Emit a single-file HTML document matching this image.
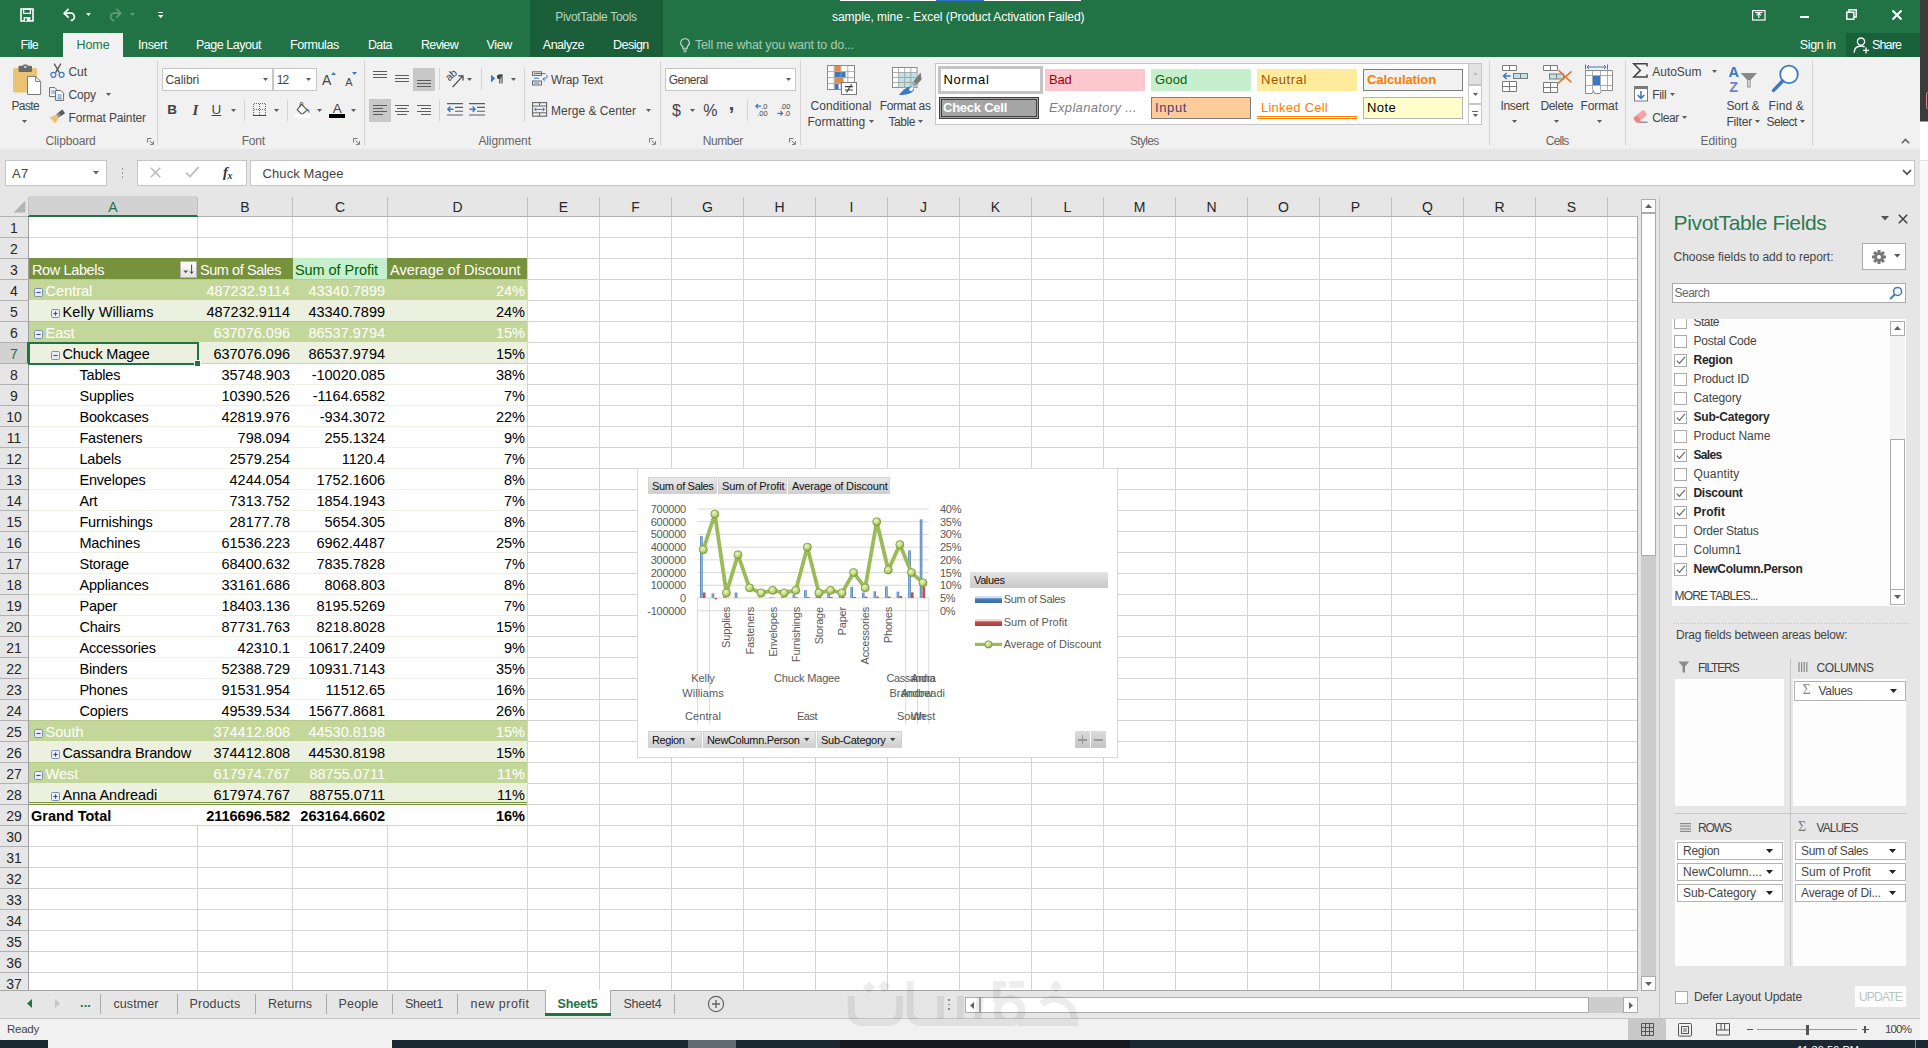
<!DOCTYPE html>
<html><head><meta charset="utf-8"><title>sample, mine - Excel</title>
<style>
html,body{margin:0;padding:0;background:#fff;}
body{width:1928px;height:1048px;overflow:hidden;position:relative;font-family:"Liberation Sans",sans-serif;}
#app{position:absolute;left:0;top:0;width:1928px;height:1048px;overflow:hidden;}
#app div,#app span.t,#app svg{position:absolute;}
span.t{white-space:nowrap;font-family:"Liberation Sans",sans-serif;}
svg{overflow:visible;}
</style></head><body><div id="app">
<div style="left:1920px;top:0px;width:8px;height:121px;background:#3b3b3b;"></div>
<div style="left:1920px;top:121px;width:8px;height:1px;background:#f08a24;"></div>
<div style="left:1920px;top:122px;width:8px;height:38px;background:#ffffff;"></div>
<div style="left:1920px;top:160px;width:8px;height:1px;background:#e2e2e2;"></div>
<div style="left:1920px;top:161px;width:8px;height:879px;background:#f9f9f9;"></div>
<div style="left:1926px;top:92px;width:3px;height:17px;border:1px solid #e08b7a;border-radius:3px;box-sizing:border-box;"></div>
<div style="left:0px;top:0px;width:1920px;height:57px;background:#217346;"></div>
<div style="left:530px;top:0px;width:133px;height:57px;background:#1b5e3a;"></div>
<div style="left:840px;top:0px;width:96px;height:1px;background:#ffffff;"></div>
<div style="left:936px;top:0px;width:48px;height:1px;background:#2f6fc6;"></div>
<div style="left:984px;top:0px;width:97px;height:1px;background:#ffffff;"></div>
<svg style="left:20px;top:8px;" width="14" height="14" viewBox="0 0 14 14"><path d="M1 1H13V13H1Z" fill="none" stroke="#fff" stroke-width="1.6"/><rect x="3.6" y="1" width="6.8" height="4.4" fill="none" stroke="#fff" stroke-width="1.3"/><rect x="3.6" y="9" width="6.8" height="4" fill="#fff"/><rect x="5" y="10.4" width="1.8" height="2.6" fill="#217346"/></svg>
<svg style="left:63px;top:8px;" width="15" height="13" viewBox="0 0 15 13"><path d="M1.2 5.2H9.2A4 4 0 0 1 9.2 12.4H7.6" fill="none" stroke="#fff" stroke-width="1.7"/><path d="M5.6 0.8L1.2 5.2L5.6 9.6" fill="none" stroke="#fff" stroke-width="1.7"/></svg>
<svg style="left:85.0px;top:12.0px" width="7" height="5" viewBox="-1 -1 7 5"><path d="M0 0H5L2.5 3Z" fill="#fff"/></svg>
<svg style="left:107px;top:8px;" width="15" height="13" viewBox="0 0 15 13"><path d="M13.8 5.2H5.8A4 4 0 0 0 5.8 12.4H7.4" fill="none" stroke="#5f9c7b" stroke-width="1.7"/><path d="M9.4 0.8L13.8 5.2L9.4 9.6" fill="none" stroke="#5f9c7b" stroke-width="1.7"/></svg>
<svg style="left:129.0px;top:12.0px" width="7" height="5" viewBox="-1 -1 7 5"><path d="M0 0H5L2.5 3Z" fill="#5f9c7b"/></svg>
<div style="left:158px;top:12px;width:5px;height:1.3px;background:#fff;"></div>
<svg style="left:156.75px;top:13.9px" width="7.5" height="5.2" viewBox="-1 -1 7.5 5.2"><path d="M0 0H5.5L2.75 3.2Z" fill="#fff"/></svg>
<span class="t" style="top:9.00px;line-height:16px;font-size:12px;color:#b9d6c5;letter-spacing:-0.314px;left:555.25px;">PivotTable Tools</span>
<span class="t" style="top:9.00px;line-height:16px;font-size:12px;color:#fff;letter-spacing:-0.049px;left:832.05px;">sample, mine - Excel (Product Activation Failed)</span>
<svg style="left:1752px;top:10px;" width="14" height="11" viewBox="0 0 14 11"><rect x="0.6" y="0.6" width="12.4" height="9.4" fill="none" stroke="#fff" stroke-width="1.2"/><path d="M6.8 8V3.4M4.6 5.4L6.8 3.2L9 5.4" fill="none" stroke="#fff" stroke-width="1.2"/><path d="M3 2.6H10.6" stroke="#fff" stroke-width="1"/></svg>
<div style="left:1800px;top:16px;width:9px;height:2px;background:#fff;"></div>
<svg style="left:1846px;top:9px;" width="11" height="11" viewBox="0 0 11 11"><rect x="0.8" y="3.2" width="7" height="7" fill="none" stroke="#fff" stroke-width="1.5"/><path d="M3 3V0.8H10.2V8H8" fill="none" stroke="#fff" stroke-width="1.5"/></svg>
<svg style="left:1892px;top:10px;" width="10" height="10" viewBox="0 0 10 10"><path d="M0.5 0.5L9.5 9.5M9.5 0.5L0.5 9.5" stroke="#fff" stroke-width="2"/></svg>
<div style="left:63px;top:33px;width:60px;height:24px;background:#f1f1f1;"></div>
<span class="t" style="top:36.90px;line-height:16px;font-size:12.5px;color:#fff;letter-spacing:-0.686px;left:20.60px;">File</span>
<span class="t" style="top:36.90px;line-height:16px;font-size:12.5px;color:#217346;letter-spacing:-0.087px;left:76.50px;">Home</span>
<span class="t" style="top:36.90px;line-height:16px;font-size:12.5px;color:#fff;letter-spacing:-0.378px;left:138.00px;">Insert</span>
<span class="t" style="top:36.90px;line-height:16px;font-size:12.5px;color:#fff;letter-spacing:-0.473px;left:196.00px;">Page Layout</span>
<span class="t" style="top:36.90px;line-height:16px;font-size:12.5px;color:#fff;letter-spacing:-0.419px;left:290.00px;">Formulas</span>
<span class="t" style="top:36.90px;line-height:16px;font-size:12.5px;color:#fff;letter-spacing:-0.664px;left:368.00px;">Data</span>
<span class="t" style="top:36.90px;line-height:16px;font-size:12.5px;color:#fff;letter-spacing:-0.665px;left:421.00px;">Review</span>
<span class="t" style="top:36.90px;line-height:16px;font-size:12.5px;color:#fff;letter-spacing:-0.342px;left:486.50px;">View</span>
<span class="t" style="top:36.90px;line-height:16px;font-size:12.5px;color:#fff;letter-spacing:-0.460px;left:542.75px;">Analyze</span>
<span class="t" style="top:36.90px;line-height:16px;font-size:12.5px;color:#fff;letter-spacing:-0.527px;left:613.00px;">Design</span>
<svg style="left:679.5px;top:38px;" width="10" height="15" viewBox="0 0 10 15"><path d="M5 0.8A4 4 0 0 1 7.4 8.2V10.2H2.6V8.2A4 4 0 0 1 5 0.8Z" fill="none" stroke="#c5dccf" stroke-width="1.1"/><path d="M3 12H7M3.6 13.8H6.4" stroke="#c5dccf" stroke-width="1.1"/></svg>
<span class="t" style="top:36.90px;line-height:16px;font-size:12.5px;color:#a9cbb8;letter-spacing:-0.198px;left:695.00px;">Tell me what you want to do...</span>
<span class="t" style="top:36.90px;line-height:16px;font-size:12.5px;color:#fff;letter-spacing:-0.353px;left:1799.75px;">Sign in</span>
<div style="left:1846px;top:33px;width:74px;height:24px;background:#19613a;"></div>
<svg style="left:1853px;top:37px;" width="17" height="17" viewBox="0 0 17 17"><circle cx="8" cy="4.6" r="3.6" fill="none" stroke="#fff" stroke-width="1.3"/><path d="M1 15.6C1.4 11 4.4 9 8 9C9.4 9 10.6 9.3 11.6 9.9" fill="none" stroke="#fff" stroke-width="1.3"/><path d="M13 10.4V16.4M10 13.4H16" stroke="#fff" stroke-width="1.3"/></svg>
<span class="t" style="top:36.90px;line-height:16px;font-size:12.5px;color:#fff;letter-spacing:-0.872px;left:1872.00px;">Share</span>
<div style="left:0px;top:57px;width:1920px;height:92px;background:#f1f1f1;"></div>
<div style="left:0px;top:149px;width:1920px;height:48px;background:#e6e6e6;"></div>
<svg style="left:13px;top:64px;" width="28" height="31" viewBox="0 0 28 31"><rect x="0" y="4" width="24" height="24.6" rx="1.6" fill="#ebc374"/><rect x="5.5" y="1.8" width="13.5" height="6.2" rx="1" fill="#6a6a6a"/><rect x="10" y="0.4" width="4.6" height="3.4" rx="1" fill="#6a6a6a"/><rect x="11.2" y="2.2" width="2.2" height="1.6" fill="#f1f1f1"/><path d="M14.5 12.4H22.6L27.6 17.4V30.5H14.5Z" fill="#fff" stroke="#7a7a7a" stroke-width="1"/><path d="M22.6 12.4V17.4H27.6" fill="none" stroke="#7a7a7a" stroke-width="1"/></svg>
<span class="t" style="top:98.00px;line-height:16px;font-size:12px;color:#444;letter-spacing:-0.638px;left:11.50px;">Paste</span>
<svg style="left:21.0px;top:119.0px" width="7" height="5" viewBox="-1 -1 7 5"><path d="M0 0H5L2.5 3Z" fill="#5c5c5c"/></svg>
<svg style="left:50px;top:63px;" width="15" height="15" viewBox="0 0 15 15"><path d="M4.2 0.6L9.4 9.6M10.8 0.6L5.6 9.6" stroke="#555" stroke-width="1.3" fill="none"/><circle cx="3.4" cy="11.8" r="2.5" fill="none" stroke="#3b78c4" stroke-width="1.2"/><circle cx="11.6" cy="11.8" r="2.5" fill="none" stroke="#3b78c4" stroke-width="1.2"/></svg>
<span class="t" style="top:63.75px;line-height:16px;font-size:12px;color:#444;letter-spacing:-0.060px;left:68.50px;">Cut</span>
<svg style="left:49px;top:87px;" width="16" height="14" viewBox="0 0 16 14"><path d="M0.6 0.6H5.8L8 2.8V9.6H0.6Z" fill="#fff" stroke="#666" stroke-width="1"/><path d="M2.2 4H6M2.2 6H6" stroke="#3b78c4" stroke-width="0.9"/><path d="M6.6 3.6H12L14.6 6.2V13.4H6.6Z" fill="#fff" stroke="#666" stroke-width="1"/><path d="M8.4 8H12.8M8.4 10H12.8M8.4 11.8H12.8" stroke="#3b78c4" stroke-width="0.9"/></svg>
<span class="t" style="top:87.00px;line-height:16px;font-size:12px;color:#444;letter-spacing:-0.130px;left:68.50px;">Copy</span>
<svg style="left:104.5px;top:92.0px" width="7" height="5" viewBox="-1 -1 7 5"><path d="M0 0H5L2.5 3Z" fill="#5c5c5c"/></svg>
<svg style="left:49px;top:109px;" width="17" height="16" viewBox="0 0 17 16"><path d="M9.2 3.4L13.4 0.6L16 4.2L11.8 7.2Z" fill="#5c5c5c"/><path d="M7 5.2L9.2 3.6L11.8 7.2L9.6 8.8Z" fill="#8a8a8a"/><path d="M0.8 8.6L7.2 5.4L9.8 9L6 14.6Z" fill="#ebc374"/></svg>
<span class="t" style="top:110.00px;line-height:16px;font-size:12px;color:#444;letter-spacing:-0.134px;left:68.50px;">Format Painter</span>
<span class="t" style="top:133.00px;line-height:16px;font-size:12px;color:#666;letter-spacing:-0.153px;left:45.60px;">Clipboard</span>
<svg style="left:146.5px;top:138px;" width="7" height="7" viewBox="0 0 7 7"><path d="M0.5 4.5V0.5H4.5" fill="none" stroke="#777" stroke-width="1"/><path d="M2.6 2.6L6 6M6.4 3V6.4H3" fill="none" stroke="#777" stroke-width="1"/></svg>
<div style="left:157px;top:61px;width:1px;height:84px;background:#d4d4d4;"></div>
<div style="left:162px;top:68px;width:111px;height:23px;background:#fff;border:1px solid #c6c6c6;box-sizing:border-box;"></div>
<div style="left:273px;top:68px;width:43.5px;height:23px;background:#fff;border:1px solid #c6c6c6;box-sizing:border-box;"></div>
<span class="t" style="top:71.50px;line-height:16px;font-size:12px;color:#444;letter-spacing:-0.074px;left:165.50px;">Calibri</span>
<svg style="left:261.5px;top:77.0px" width="7" height="5" viewBox="-1 -1 7 5"><path d="M0 0H5L2.5 3Z" fill="#5c5c5c"/></svg>
<span class="t" style="top:71.50px;line-height:16px;font-size:12px;color:#444;letter-spacing:-0.926px;left:276.75px;">12</span>
<svg style="left:305.0px;top:77.0px" width="7" height="5" viewBox="-1 -1 7 5"><path d="M0 0H5L2.5 3Z" fill="#5c5c5c"/></svg>
<span class="t" style="top:71.00px;line-height:18px;font-size:14px;color:#444;left:322.00px;">A</span>
<svg style="left:330.5px;top:71.5px;" width="5" height="3" viewBox="0 0 5 3"><path d="M0 3H5L2.5 0Z" fill="#3b78c4"/></svg>
<span class="t" style="top:74.50px;line-height:14px;font-size:11px;color:#444;left:345.20px;">A</span>
<svg style="left:352.2px;top:71.8px;" width="5" height="3" viewBox="0 0 5 3"><path d="M0 0H5L2.5 3Z" fill="#3b78c4"/></svg>
<span class="t" style="top:100.50px;line-height:18px;font-size:13.5px;color:#444;font-weight:700;left:167.32px;">B</span>
<span class="t" style="top:100.50px;line-height:18px;font-size:13.5px;color:#444;font-style:italic;left:192.62px;font-family:'Liberation Serif',serif;font-weight:700;font-size:15px;">I</span>
<span class="t" style="top:100.50px;line-height:18px;font-size:13.5px;color:#444;left:211.53px;text-decoration:underline;">U</span>
<svg style="left:229.8px;top:108.0px" width="7" height="5" viewBox="-1 -1 7 5"><path d="M0 0H5L2.5 3Z" fill="#5c5c5c"/></svg>
<div style="left:244px;top:100px;width:1px;height:21px;background:#d4d4d4;"></div>
<svg style="left:253px;top:103px;" width="14" height="13" viewBox="0 0 14 13"><g shape-rendering="crispEdges"><path d="M0.5 0.5H13M0.5 6.5H13M0.5 0.5V12M6.5 0.5V12M12.5 0.5V12" stroke="#6a6a6a" stroke-width="1" stroke-dasharray="1 1" fill="none"/><path d="M0 12.5H13" stroke="#444" stroke-width="1"/></g></svg>
<svg style="left:272.9px;top:108.0px" width="7" height="5" viewBox="-1 -1 7 5"><path d="M0 0H5L2.5 3Z" fill="#5c5c5c"/></svg>
<div style="left:287px;top:100px;width:1px;height:21px;background:#d4d4d4;"></div>
<svg style="left:295px;top:102px;" width="17" height="16" viewBox="0 0 17 16"><path d="M6.6 2.4L12.2 8L7 12.4L2.2 7.6Z" fill="#fff" stroke="#555" stroke-width="1.1"/><path d="M5.2 4.6V1.6A1.3 1.3 0 0 1 7.8 1.6V3.4" fill="none" stroke="#555" stroke-width="1"/><path d="M12.4 6.4C14.2 7.4 15 9.2 14.4 11.2C13.6 10 12.8 9.2 12 8.6Z" fill="#3b78c4"/><rect x="0" y="12.4" width="16" height="3.4" fill="#fff"/></svg>
<svg style="left:315.8px;top:108.0px" width="7" height="5" viewBox="-1 -1 7 5"><path d="M0 0H5L2.5 3Z" fill="#5c5c5c"/></svg>
<span class="t" style="top:99.60px;line-height:18px;font-size:13.5px;color:#444;left:332.70px;">A</span>
<div style="left:329px;top:114.3px;width:16px;height:3.8px;background:#000;"></div>
<svg style="left:350.0px;top:108.0px" width="7" height="5" viewBox="-1 -1 7 5"><path d="M0 0H5L2.5 3Z" fill="#5c5c5c"/></svg>
<span class="t" style="top:133.00px;line-height:16px;font-size:12px;color:#666;letter-spacing:-0.255px;left:241.75px;">Font</span>
<svg style="left:353px;top:138px;" width="7" height="7" viewBox="0 0 7 7"><path d="M0.5 4.5V0.5H4.5" fill="none" stroke="#777" stroke-width="1"/><path d="M2.6 2.6L6 6M6.4 3V6.4H3" fill="none" stroke="#777" stroke-width="1"/></svg>
<div style="left:364px;top:61px;width:1px;height:84px;background:#d4d4d4;"></div>
<div style="left:373px;top:70.95px;width:14px;height:1.1px;background:#5c5c5c;"></div>
<div style="left:373px;top:74.05px;width:14px;height:1.1px;background:#5c5c5c;"></div>
<div style="left:373px;top:77.15px;width:14px;height:1.1px;background:#5c5c5c;"></div>
<div style="left:395px;top:74.95px;width:14px;height:1.1px;background:#5c5c5c;"></div>
<div style="left:395px;top:78.05px;width:14px;height:1.1px;background:#5c5c5c;"></div>
<div style="left:395px;top:81.15px;width:14px;height:1.1px;background:#5c5c5c;"></div>
<div style="left:413px;top:68px;width:22px;height:23px;background:#c8c8c8;"></div>
<div style="left:417px;top:79.95px;width:14px;height:1.1px;background:#5c5c5c;"></div>
<div style="left:417px;top:83.05px;width:14px;height:1.1px;background:#5c5c5c;"></div>
<div style="left:417px;top:86.15px;width:14px;height:1.1px;background:#5c5c5c;"></div>
<div style="left:439px;top:68px;width:1px;height:22px;background:#d4d4d4;"></div>
<svg style="left:446px;top:69px;" width="19" height="19" viewBox="0 0 19 19"><text x="0" y="0" font-size="10.5" font-family="Liberation Sans" fill="#444" transform="translate(3.2 12.6) rotate(-42)">ab</text><path d="M6.6 18.2L16.6 7.2M12.4 6.8H17V11.4" fill="none" stroke="#444" stroke-width="1.2"/></svg>
<svg style="left:466.1px;top:77.0px" width="7" height="5" viewBox="-1 -1 7 5"><path d="M0 0H5L2.5 3Z" fill="#5c5c5c"/></svg>
<div style="left:481px;top:68px;width:1px;height:22px;background:#d4d4d4;"></div>
<svg style="left:491px;top:73px;" width="13" height="12" viewBox="0 0 13 12"><path d="M0 1.4L4.2 5.4L0 9.4Z" fill="#3b78c4"/><path d="M8.8 1.4V10.4M11 1.4V10.4" stroke="#444" stroke-width="1.1"/><path d="M11.8 1.4H8.2A2.4 2.4 0 0 0 8.2 6.2H8.8Z" fill="#444"/></svg>
<svg style="left:509.9px;top:77.0px" width="7" height="5" viewBox="-1 -1 7 5"><path d="M0 0H5L2.5 3Z" fill="#5c5c5c"/></svg>
<div style="left:524px;top:68px;width:1px;height:54px;background:#d4d4d4;"></div>
<div style="left:369px;top:99px;width:22px;height:23px;background:#c8c8c8;"></div>
<div style="left:373px;top:104.95px;width:14px;height:1.1px;background:#5c5c5c;"></div>
<div style="left:373px;top:108.05px;width:10px;height:1.1px;background:#5c5c5c;"></div>
<div style="left:373px;top:111.15px;width:14px;height:1.1px;background:#5c5c5c;"></div>
<div style="left:373px;top:114.05px;width:10px;height:1.1px;background:#5c5c5c;"></div>
<div style="left:395px;top:104.95px;width:14px;height:1.1px;background:#5c5c5c;"></div>
<div style="left:397px;top:108.05px;width:10px;height:1.1px;background:#5c5c5c;"></div>
<div style="left:395px;top:111.15px;width:14px;height:1.1px;background:#5c5c5c;"></div>
<div style="left:397px;top:114.05px;width:10px;height:1.1px;background:#5c5c5c;"></div>
<div style="left:417px;top:104.95px;width:14px;height:1.1px;background:#5c5c5c;"></div>
<div style="left:421px;top:108.05px;width:10px;height:1.1px;background:#5c5c5c;"></div>
<div style="left:417px;top:111.15px;width:14px;height:1.1px;background:#5c5c5c;"></div>
<div style="left:421px;top:114.05px;width:10px;height:1.1px;background:#5c5c5c;"></div>
<div style="left:439px;top:100px;width:1px;height:21px;background:#d4d4d4;"></div>
<svg style="left:447px;top:103px;" width="17" height="13" viewBox="0 0 17 13"><path d="M0 0.6H16M8 4.4H16M8 8.2H16M0 12H16" stroke="#5c5c5c" stroke-width="1.1"/><path d="M6.6 6.3H0.8M3.4 3.6L0.8 6.3L3.4 9" fill="none" stroke="#3b78c4" stroke-width="1.4"/></svg>
<svg style="left:469px;top:103px;" width="17" height="13" viewBox="0 0 17 13"><path d="M0 0.6H16M8 4.4H16M8 8.2H16M0 12H16" stroke="#5c5c5c" stroke-width="1.1"/><path d="M0.4 6.3H6.2M3.6 3.6L6.2 6.3L3.6 9" fill="none" stroke="#3b78c4" stroke-width="1.4"/></svg>
<svg style="left:532px;top:71px;" width="17" height="15" viewBox="0 0 17 15"><rect x="0.5" y="0.8" width="9" height="3.6" fill="none" stroke="#666" stroke-width="1"/><rect x="0.5" y="10" width="9" height="4" fill="none" stroke="#666" stroke-width="1"/><path d="M2 2.6H13.4M2 7.2H7M2 12H7.4" stroke="#3b78c4" stroke-width="1"/><path d="M14.4 3.6C16 5.4 15 8.4 11.2 8.2M12.8 6.4L10.8 8.2L12.8 10" fill="none" stroke="#3b78c4" stroke-width="1"/></svg>
<span class="t" style="top:72.00px;line-height:16px;font-size:12px;color:#444;letter-spacing:-0.178px;left:551.00px;">Wrap Text</span>
<svg style="left:532px;top:102px;" width="16" height="15" viewBox="0 0 16 15"><rect x="0.6" y="0.6" width="14" height="13.6" fill="none" stroke="#666" stroke-width="1.1"/><path d="M0.6 4H14.6M0.6 10.8H14.6M7.6 0.6V4M7.6 10.8V14.2" stroke="#666" stroke-width="1"/><path d="M2.6 7.4H12.6M4.4 5.8L2.6 7.4L4.4 9M10.8 5.8L12.6 7.4L10.8 9" fill="none" stroke="#3b78c4" stroke-width="1"/></svg>
<span class="t" style="top:103.00px;line-height:16px;font-size:12px;color:#444;letter-spacing:0.020px;left:551.00px;">Merge &amp; Center</span>
<svg style="left:645.0px;top:108.0px" width="7" height="5" viewBox="-1 -1 7 5"><path d="M0 0H5L2.5 3Z" fill="#5c5c5c"/></svg>
<span class="t" style="top:133.00px;line-height:16px;font-size:12px;color:#666;letter-spacing:-0.097px;left:478.40px;">Alignment</span>
<svg style="left:649px;top:138px;" width="7" height="7" viewBox="0 0 7 7"><path d="M0.5 4.5V0.5H4.5" fill="none" stroke="#777" stroke-width="1"/><path d="M2.6 2.6L6 6M6.4 3V6.4H3" fill="none" stroke="#777" stroke-width="1"/></svg>
<div style="left:660px;top:61px;width:1px;height:84px;background:#d4d4d4;"></div>
<div style="left:665px;top:68px;width:131px;height:23px;background:#fff;border:1px solid #c6c6c6;box-sizing:border-box;"></div>
<span class="t" style="top:71.50px;line-height:16px;font-size:12px;color:#444;letter-spacing:-0.529px;left:668.75px;">General</span>
<svg style="left:785.0px;top:77.0px" width="7" height="5" viewBox="-1 -1 7 5"><path d="M0 0H5L2.5 3Z" fill="#5c5c5c"/></svg>
<span class="t" style="top:99.50px;line-height:21px;font-size:16px;color:#444;left:672.05px;">$</span>
<svg style="left:688.8px;top:108.0px" width="7" height="5" viewBox="-1 -1 7 5"><path d="M0 0H5L2.5 3Z" fill="#5c5c5c"/></svg>
<span class="t" style="top:99.50px;line-height:21px;font-size:16px;color:#444;left:703.19px;">%</span>
<span class="t" style="top:90.00px;line-height:26px;font-size:20px;color:#444;font-weight:700;left:728.72px;">,</span>
<div style="left:747px;top:100px;width:1px;height:21px;background:#d4d4d4;"></div>
<svg style="left:755px;top:103px;" width="15" height="14" viewBox="0 0 15 14"><path d="M6 3.2H0.8M3 1L0.8 3.2L3 5.4" fill="none" stroke="#3b78c4" stroke-width="1.2"/><text x="6.2" y="5.8" font-size="7.5" font-family="Liberation Sans" fill="#444">.0</text><text x="2.2" y="13" font-size="7.5" font-family="Liberation Sans" fill="#444">.00</text></svg>
<svg style="left:777px;top:103px;" width="15" height="14" viewBox="0 0 15 14"><text x="3" y="5.8" font-size="7.5" font-family="Liberation Sans" fill="#444">.00</text><path d="M0.4 10.4H5.6M3.4 8.2L5.6 10.4L3.4 12.6" fill="none" stroke="#3b78c4" stroke-width="1.2"/><text x="7" y="13" font-size="7.5" font-family="Liberation Sans" fill="#444">.0</text></svg>
<span class="t" style="top:133.00px;line-height:16px;font-size:12px;color:#666;letter-spacing:-0.415px;left:702.75px;">Number</span>
<svg style="left:789px;top:138px;" width="7" height="7" viewBox="0 0 7 7"><path d="M0.5 4.5V0.5H4.5" fill="none" stroke="#777" stroke-width="1"/><path d="M2.6 2.6L6 6M6.4 3V6.4H3" fill="none" stroke="#777" stroke-width="1"/></svg>
<div style="left:800px;top:61px;width:1px;height:84px;background:#d4d4d4;"></div>
<svg style="left:827px;top:65px;" width="31" height="30" viewBox="0 0 31 30"><rect x="0.5" y="0.5" width="27" height="24" fill="#fff" stroke="#8a8a8a"/><rect x="7.6" y="1" width="6" height="5.4" fill="#e58a3c"/><rect x="7.6" y="7" width="11" height="5.4" fill="#3b78c4"/><rect x="7.6" y="13" width="9" height="5.4" fill="#e58a3c"/><rect x="7.6" y="19" width="4" height="5.4" fill="#3b78c4"/><path d="M7.2 0.5V24.5M14 0.5V24.5M20.8 0.5V24.5M0.5 6.6H27.5M0.5 12.6H27.5M0.5 18.6H27.5" stroke="#9a9a9a" stroke-width="0.8" fill="none"/><rect x="14.5" y="17.5" width="15" height="12" fill="#fff" stroke="#7a7a7a"/><path d="M18 21.6H26M18 25H26M24.6 19.4L19.6 27.4" stroke="#444" stroke-width="1.1"/></svg>
<span class="t" style="top:98.00px;line-height:16px;font-size:12px;color:#444;letter-spacing:0.085px;left:810.60px;">Conditional</span>
<span class="t" style="top:114.00px;line-height:16px;font-size:12px;color:#444;letter-spacing:0.038px;left:807.50px;">Formatting</span>
<svg style="left:868.0px;top:119.0px" width="7" height="5" viewBox="-1 -1 7 5"><path d="M0 0H5L2.5 3Z" fill="#5c5c5c"/></svg>
<svg style="left:892px;top:65px;" width="32" height="31" viewBox="0 0 32 31"><rect x="0.5" y="2.5" width="24.5" height="20" fill="#fff" stroke="#8a8a8a"/><rect x="6.6" y="7.6" width="18" height="14.6" fill="#bfe3e6"/><path d="M6.6 2.5V22.5M12.7 2.5V22.5M18.8 2.5V22.5M0.5 7.5H25M0.5 12.5H25M0.5 17.5H25" stroke="#9a9a9a" stroke-width="0.8" fill="none"/><path d="M21.4 16.6L28.6 7.6L29.6 14.4L24.4 20Z" fill="#7a7a7a"/><path d="M19.8 19.4L23.4 21.8L25 19.4L21.6 16.6Z" fill="#a5a5a5"/><path d="M7 30C10 26 13.6 22 18.6 21.4C21.6 21.2 22.8 23.2 21.6 25.4C19.6 28.6 14 30 7 30Z" fill="#3b78c4"/><ellipse cx="19.4" cy="24" rx="2.4" ry="1.6" fill="#fff" transform="rotate(-30 19.4 24)"/></svg>
<span class="t" style="top:98.00px;line-height:16px;font-size:12px;color:#444;letter-spacing:-0.358px;left:879.75px;">Format as</span>
<span class="t" style="top:114.00px;line-height:16px;font-size:12px;color:#444;letter-spacing:-0.440px;left:888.50px;">Table</span>
<svg style="left:917.1px;top:119.0px" width="7" height="5" viewBox="-1 -1 7 5"><path d="M0 0H5L2.5 3Z" fill="#5c5c5c"/></svg>
<div style="left:935px;top:63px;width:547px;height:62px;background:#fff;border:1px solid #c6c6c6;box-sizing:border-box;"></div>
<div style="left:1468px;top:63px;width:14px;height:21.5px;background:#e1e1e1;border:1px solid #c6c6c6;box-sizing:border-box;"></div>
<div style="left:1468px;top:84.5px;width:14px;height:19px;background:#fff;border:1px solid #c6c6c6;box-sizing:border-box;"></div>
<div style="left:1468px;top:103.5px;width:14px;height:21.5px;background:#fff;border:1px solid #c6c6c6;box-sizing:border-box;"></div>
<svg style="left:1472.5px;top:72px;" width="5" height="3" viewBox="0 0 5 3"><path d="M0 3H5L2.5 0Z" fill="#c0c0c0"/></svg>
<svg style="left:1471.5px;top:92.0px" width="7" height="5" viewBox="-1 -1 7 5"><path d="M0 0H5L2.5 3Z" fill="#5c5c5c"/></svg>
<div style="left:1472px;top:110.5px;width:6px;height:1px;background:#666;"></div>
<svg style="left:1471.5px;top:112.5px" width="7" height="5" viewBox="-1 -1 7 5"><path d="M0 0H5L2.5 3Z" fill="#5c5c5c"/></svg>
<div style="left:938px;top:66px;width:105px;height:28px;background:#fff;border:3px solid #c4c4c4;box-sizing:border-box;"></div>
<span class="t" style="top:71.00px;line-height:17px;font-size:13px;color:#000;letter-spacing:0.685px;left:943.50px;">Normal</span>
<div style="left:1045px;top:69px;width:100px;height:22px;background:#ffc7ce;"></div>
<span class="t" style="top:71.00px;line-height:17px;font-size:13px;color:#9c0006;letter-spacing:-0.211px;left:1049.00px;">Bad</span>
<div style="left:1151px;top:69px;width:100px;height:22px;background:#c6efce;"></div>
<span class="t" style="top:71.00px;line-height:17px;font-size:13px;color:#006100;letter-spacing:0.174px;left:1155.00px;">Good</span>
<div style="left:1257px;top:69px;width:100px;height:22px;background:#ffeb9c;"></div>
<span class="t" style="top:71.00px;line-height:17px;font-size:13px;color:#9c5700;letter-spacing:0.585px;left:1261.00px;">Neutral</span>
<div style="left:1363px;top:69px;width:100px;height:22px;background:#f2f2f2;border:1px solid #7f7f7f;box-sizing:border-box;"></div>
<span class="t" style="top:71.00px;line-height:17px;font-size:13px;color:#fa7d00;font-weight:700;letter-spacing:-0.097px;left:1367.00px;">Calculation</span>
<div style="left:939px;top:97px;width:100px;height:22px;background:#a5a5a5;border:3px double #3f3f3f;box-sizing:border-box;"></div>
<span class="t" style="top:99.00px;line-height:17px;font-size:13px;color:#fff;font-weight:700;letter-spacing:-0.248px;left:943.00px;">Check Cell</span>
<span class="t" style="top:99.00px;line-height:17px;font-size:13px;color:#7f7f7f;font-style:italic;letter-spacing:0.326px;left:1049.00px;">Explanatory ...</span>
<div style="left:1151px;top:97px;width:100px;height:22px;background:#ffcc99;border:1px solid #7f7f7f;box-sizing:border-box;"></div>
<span class="t" style="top:99.00px;line-height:17px;font-size:13px;color:#3f3f76;letter-spacing:0.616px;left:1155.00px;">Input</span>
<span class="t" style="top:99.00px;line-height:17px;font-size:13px;color:#fa7d00;letter-spacing:0.244px;left:1261.00px;">Linked Cell</span>
<div style="left:1257px;top:116px;width:100px;height:1px;background:#ff8001;"></div>
<div style="left:1257px;top:118px;width:100px;height:1px;background:#ff8001;"></div>
<div style="left:1363px;top:97px;width:100px;height:22px;background:#ffffcc;border:1px solid #b2b2b2;box-sizing:border-box;"></div>
<span class="t" style="top:99.00px;line-height:17px;font-size:13px;color:#000;letter-spacing:0.385px;left:1367.00px;">Note</span>
<span class="t" style="top:133.00px;line-height:16px;font-size:12px;color:#666;letter-spacing:-0.697px;left:1130.00px;">Styles</span>
<div style="left:1489px;top:61px;width:1px;height:84px;background:#d4d4d4;"></div>
<svg style="left:1502px;top:65px;" width="27" height="27" viewBox="0 0 27 27"><path d="M0.5 0.5H14.5V5.5H0.5ZM7.5 0.5V5.5" fill="#fff" stroke="#7a7a7a" stroke-width="1"/><path d="M0.5 16.5H14.5V26.5H0.5ZM7.5 16.5V26.5M0.5 21.5H14.5" fill="#fff" stroke="#7a7a7a" stroke-width="1"/><rect x="11.5" y="8.5" width="14" height="5" fill="#bfe3e6" stroke="#7a7a7a"/><path d="M18.5 8.5V13.5" stroke="#7a7a7a"/><path d="M8.6 11H1.6M4.6 8L1.6 11L4.6 14" fill="none" stroke="#3b78c4" stroke-width="1.6"/></svg>
<span class="t" style="top:98.00px;line-height:16px;font-size:12px;color:#444;letter-spacing:-0.270px;left:1500.40px;">Insert</span>
<svg style="left:1511.0px;top:119.0px" width="7" height="5" viewBox="-1 -1 7 5"><path d="M0 0H5L2.5 3Z" fill="#5c5c5c"/></svg>
<svg style="left:1543px;top:65px;" width="30" height="28" viewBox="0 0 30 28"><path d="M0.5 0.5H14.5V5.5H0.5ZM7.5 0.5V5.5" fill="#fff" stroke="#7a7a7a" stroke-width="1"/><path d="M0.5 17.5H14.5V27.5H0.5ZM7.5 17.5V27.5M0.5 22.5H14.5" fill="#fff" stroke="#7a7a7a" stroke-width="1"/><rect x="6.5" y="9" width="14" height="5" fill="#bfe3e6" stroke="#7a7a7a"/><path d="M13.5 9V14" stroke="#7a7a7a"/><path d="M15.6 5.4L28.4 17.4M28.6 6.4L15 18.4" fill="none" stroke="#e07a35" stroke-width="1.7"/></svg>
<span class="t" style="top:98.00px;line-height:16px;font-size:12px;color:#444;letter-spacing:-0.317px;left:1540.40px;">Delete</span>
<svg style="left:1552.9px;top:119.0px" width="7" height="5" viewBox="-1 -1 7 5"><path d="M0 0H5L2.5 3Z" fill="#5c5c5c"/></svg>
<svg style="left:1585px;top:64px;" width="29" height="31" viewBox="0 0 29 31"><path d="M0.5 0.5V5.5M22.5 0.5V5.5M2 3H21M4 1L2 3L4 5M19 1L21 3L19 5" fill="none" stroke="#3b78c4" stroke-width="1"/><path d="M0.5 6.5H27.5V26.5H16.5L15 29.5H9.5L8.5 26.5L7 29.5H0.5Z" fill="#fff" stroke="#8a8a8a"/><path d="M7.5 6.5V26.5M15.5 6.5V26.5M22.5 6.5V26.5M0.5 11.5H27.5M0.5 21.5H27.5" stroke="#9a9a9a" stroke-width="0.8"/><rect x="8" y="12" width="7" height="9" fill="#3b78c4"/></svg>
<span class="t" style="top:98.00px;line-height:16px;font-size:12px;color:#444;letter-spacing:-0.085px;left:1580.40px;">Format</span>
<svg style="left:1596.0px;top:119.0px" width="7" height="5" viewBox="-1 -1 7 5"><path d="M0 0H5L2.5 3Z" fill="#5c5c5c"/></svg>
<span class="t" style="top:133.00px;line-height:16px;font-size:12px;color:#666;letter-spacing:-0.786px;left:1545.75px;">Cells</span>
<div style="left:1625px;top:61px;width:1px;height:84px;background:#d4d4d4;"></div>
<svg style="left:1633px;top:63px;" width="15" height="15" viewBox="0 0 15 15"><path d="M14 3.4V0.8H0.8L7.4 7.4L0.8 14H14V11.4" fill="none" stroke="#444" stroke-width="1.5"/></svg>
<span class="t" style="top:63.75px;line-height:16px;font-size:12px;color:#444;letter-spacing:-0.024px;left:1652.25px;">AutoSum</span>
<svg style="left:1711.0px;top:69.0px" width="7" height="5" viewBox="-1 -1 7 5"><path d="M0 0H5L2.5 3Z" fill="#5c5c5c"/></svg>
<svg style="left:1634px;top:86px;" width="14" height="16" viewBox="0 0 14 16"><rect x="0.5" y="0.5" width="13" height="14.5" fill="#fff" stroke="#7a7a7a"/><rect x="0.5" y="0.5" width="13" height="2.6" fill="#7a7a7a"/><path d="M7 5V12.4M3.6 9L7 12.4L10.4 9" fill="none" stroke="#3b78c4" stroke-width="1.6"/></svg>
<span class="t" style="top:86.50px;line-height:16px;font-size:12px;color:#444;letter-spacing:-0.334px;left:1652.25px;">Fill</span>
<svg style="left:1669.0px;top:92.0px" width="7" height="5" viewBox="-1 -1 7 5"><path d="M0 0H5L2.5 3Z" fill="#5c5c5c"/></svg>
<svg style="left:1634px;top:110px;" width="14" height="13" viewBox="0 0 14 13"><g transform="rotate(-40 6.4 6.2)"><rect x="-0.6" y="3" width="13.4" height="6.6" rx="1.8" fill="#f2a3a7"/><rect x="-0.6" y="3" width="5" height="6.6" rx="1.8" fill="#e8868b"/></g><path d="M5 12.2H13.6" stroke="#666" stroke-width="1"/></svg>
<span class="t" style="top:110.00px;line-height:16px;font-size:12px;color:#444;letter-spacing:-0.437px;left:1652.25px;">Clear</span>
<svg style="left:1680.5px;top:115.0px" width="7" height="5" viewBox="-1 -1 7 5"><path d="M0 0H5L2.5 3Z" fill="#5c5c5c"/></svg>
<svg style="left:1728px;top:65px;" width="30" height="28" viewBox="0 0 30 28"><text x="0.6" y="12" font-size="14.5" font-weight="700" font-family="Liberation Sans" fill="#3b78c4">A</text><text x="1.2" y="26.8" font-size="14.5" font-weight="700" font-family="Liberation Sans" fill="#6a86c8">Z</text><path d="M12.6 8H29L22.6 15V22.6H19.2V15Z" fill="#8a8a8a"/><rect x="20.3" y="15" width="1.3" height="6.6" fill="#f1f1f1"/></svg>
<span class="t" style="top:98.00px;line-height:16px;font-size:12px;color:#444;letter-spacing:-0.042px;left:1726.40px;">Sort &amp;</span>
<span class="t" style="top:114.00px;line-height:16px;font-size:12px;color:#444;letter-spacing:-0.179px;left:1726.40px;">Filter</span>
<svg style="left:1754.1px;top:119.0px" width="7" height="5" viewBox="-1 -1 7 5"><path d="M0 0H5L2.5 3Z" fill="#5c5c5c"/></svg>
<svg style="left:1772px;top:64px;" width="28" height="28" viewBox="0 0 28 28"><circle cx="17" cy="10.4" r="8.8" fill="#fff" stroke="#3b78c4" stroke-width="1.8"/><path d="M10.6 17L1.6 26.4" stroke="#3b78c4" stroke-width="3.4" stroke-linecap="round"/></svg>
<span class="t" style="top:98.00px;line-height:16px;font-size:12px;color:#444;letter-spacing:0.118px;left:1768.50px;">Find &amp;</span>
<span class="t" style="top:114.00px;line-height:16px;font-size:12px;color:#444;letter-spacing:-0.460px;left:1766.40px;">Select</span>
<svg style="left:1799.1px;top:119.0px" width="7" height="5" viewBox="-1 -1 7 5"><path d="M0 0H5L2.5 3Z" fill="#5c5c5c"/></svg>
<span class="t" style="top:133.00px;line-height:16px;font-size:12px;color:#666;letter-spacing:-0.065px;left:1700.50px;">Editing</span>
<div style="left:1812px;top:61px;width:1px;height:84px;background:#d4d4d4;"></div>
<svg style="left:1901px;top:137.5px;" width="9" height="6" viewBox="0 0 9 6"><path d="M0.8 5.2L4.5 1.4L8.2 5.2" fill="none" stroke="#666" stroke-width="1.6"/></svg>
<div style="left:5px;top:160px;width:102px;height:26px;background:#fff;border:1px solid #c6c6c6;box-sizing:border-box;"></div>
<span class="t" style="top:165.00px;line-height:17px;font-size:13px;color:#444;letter-spacing:0.299px;left:12.00px;">A7</span>
<svg style="left:92.0px;top:169.75px" width="8" height="5.5" viewBox="-1 -1 8 5.5"><path d="M0 0H6L3.0 3.5Z" fill="#666"/></svg>
<div style="left:121.5px;top:168px;width:1.6px;height:1.6px;background:#9a9a9a;"></div>
<div style="left:121.5px;top:172px;width:1.6px;height:1.6px;background:#9a9a9a;"></div>
<div style="left:121.5px;top:176px;width:1.6px;height:1.6px;background:#9a9a9a;"></div>
<div style="left:137px;top:160px;width:110px;height:26px;background:#fff;border:1px solid #c6c6c6;box-sizing:border-box;"></div>
<svg style="left:150px;top:167px;" width="11" height="11" viewBox="0 0 11 11"><path d="M0.8 0.8L10.2 10.2M10.2 0.8L0.8 10.2" stroke="#b8b8b8" stroke-width="1.5"/></svg>
<svg style="left:185px;top:166px;" width="15" height="12" viewBox="0 0 15 12"><path d="M1 6.6L5 10.6L13.6 1" fill="none" stroke="#c2c2c2" stroke-width="2"/></svg>
<span class="t" style="top:163.30px;line-height:19px;font-size:14.5px;color:#333;font-style:italic;left:223.00px;font-family:'Liberation Serif',serif;font-weight:700;">f</span>
<span class="t" style="top:168.70px;line-height:13px;font-size:10px;color:#333;font-style:italic;left:227.60px;font-family:'Liberation Serif',serif;font-weight:700;">x</span>
<div style="left:250px;top:160px;width:1665px;height:26px;background:#fff;border:1px solid #c6c6c6;box-sizing:border-box;"></div>
<span class="t" style="top:165.00px;line-height:17px;font-size:13px;color:#444;letter-spacing:0.072px;left:262.60px;">Chuck Magee</span>
<svg style="left:1902px;top:169px;" width="10" height="7" viewBox="0 0 10 7"><path d="M1 1L5 5.2L9 1" fill="none" stroke="#555" stroke-width="1.8"/></svg>
<div style="left:0px;top:197px;width:1638px;height:793px;background:#fff;"></div>
<div style="left:29px;top:217px;width:1608px;height:773px;background:repeating-linear-gradient(to bottom,transparent 0,transparent 20px,#d4d4d4 20px,#d4d4d4 21px);"></div>
<div style="left:197px;top:217px;width:1px;height:773px;background:#d4d4d4;"></div>
<div style="left:292px;top:217px;width:1px;height:773px;background:#d4d4d4;"></div>
<div style="left:387px;top:217px;width:1px;height:773px;background:#d4d4d4;"></div>
<div style="left:527px;top:217px;width:1px;height:773px;background:#d4d4d4;"></div>
<div style="left:599px;top:217px;width:1px;height:773px;background:#d4d4d4;"></div>
<div style="left:671px;top:217px;width:1px;height:773px;background:#d4d4d4;"></div>
<div style="left:743px;top:217px;width:1px;height:773px;background:#d4d4d4;"></div>
<div style="left:815px;top:217px;width:1px;height:773px;background:#d4d4d4;"></div>
<div style="left:887px;top:217px;width:1px;height:773px;background:#d4d4d4;"></div>
<div style="left:959px;top:217px;width:1px;height:773px;background:#d4d4d4;"></div>
<div style="left:1031px;top:217px;width:1px;height:773px;background:#d4d4d4;"></div>
<div style="left:1103px;top:217px;width:1px;height:773px;background:#d4d4d4;"></div>
<div style="left:1175px;top:217px;width:1px;height:773px;background:#d4d4d4;"></div>
<div style="left:1247px;top:217px;width:1px;height:773px;background:#d4d4d4;"></div>
<div style="left:1319px;top:217px;width:1px;height:773px;background:#d4d4d4;"></div>
<div style="left:1391px;top:217px;width:1px;height:773px;background:#d4d4d4;"></div>
<div style="left:1463px;top:217px;width:1px;height:773px;background:#d4d4d4;"></div>
<div style="left:1535px;top:217px;width:1px;height:773px;background:#d4d4d4;"></div>
<div style="left:1607px;top:217px;width:1px;height:773px;background:#d4d4d4;"></div>
<div style="left:0px;top:196px;width:1638px;height:20px;background:#e6e6e6;"></div>
<div style="left:0px;top:216px;width:1638px;height:1px;background:#b1b1b1;"></div>
<div style="left:29px;top:196px;width:168px;height:19px;background:#d2d2d2;"></div>
<div style="left:28px;top:215px;width:170px;height:2px;background:#217346;"></div>
<div style="left:197px;top:197px;width:1px;height:19px;background:#c0c0c0;"></div>
<span class="t" style="top:198.00px;line-height:18px;font-size:14px;color:#217346;left:108.33px;">A</span>
<div style="left:292px;top:197px;width:1px;height:19px;background:#c0c0c0;"></div>
<span class="t" style="top:198.00px;line-height:18px;font-size:14px;color:#262626;left:240.33px;">B</span>
<div style="left:387px;top:197px;width:1px;height:19px;background:#c0c0c0;"></div>
<span class="t" style="top:198.00px;line-height:18px;font-size:14px;color:#262626;left:334.95px;">C</span>
<div style="left:527px;top:197px;width:1px;height:19px;background:#c0c0c0;"></div>
<span class="t" style="top:198.00px;line-height:18px;font-size:14px;color:#262626;left:452.45px;">D</span>
<div style="left:599px;top:197px;width:1px;height:19px;background:#c0c0c0;"></div>
<span class="t" style="top:198.00px;line-height:18px;font-size:14px;color:#262626;left:558.83px;">E</span>
<div style="left:671px;top:197px;width:1px;height:19px;background:#c0c0c0;"></div>
<span class="t" style="top:198.00px;line-height:18px;font-size:14px;color:#262626;left:631.22px;">F</span>
<div style="left:743px;top:197px;width:1px;height:19px;background:#c0c0c0;"></div>
<span class="t" style="top:198.00px;line-height:18px;font-size:14px;color:#262626;left:702.05px;">G</span>
<div style="left:815px;top:197px;width:1px;height:19px;background:#c0c0c0;"></div>
<span class="t" style="top:198.00px;line-height:18px;font-size:14px;color:#262626;left:774.45px;">H</span>
<div style="left:887px;top:197px;width:1px;height:19px;background:#c0c0c0;"></div>
<span class="t" style="top:198.00px;line-height:18px;font-size:14px;color:#262626;left:849.55px;">I</span>
<div style="left:959px;top:197px;width:1px;height:19px;background:#c0c0c0;"></div>
<span class="t" style="top:198.00px;line-height:18px;font-size:14px;color:#262626;left:920.00px;">J</span>
<div style="left:1031px;top:197px;width:1px;height:19px;background:#c0c0c0;"></div>
<span class="t" style="top:198.00px;line-height:18px;font-size:14px;color:#262626;left:990.83px;">K</span>
<div style="left:1103px;top:197px;width:1px;height:19px;background:#c0c0c0;"></div>
<span class="t" style="top:198.00px;line-height:18px;font-size:14px;color:#262626;left:1063.61px;">L</span>
<div style="left:1175px;top:197px;width:1px;height:19px;background:#c0c0c0;"></div>
<span class="t" style="top:198.00px;line-height:18px;font-size:14px;color:#262626;left:1133.67px;">M</span>
<div style="left:1247px;top:197px;width:1px;height:19px;background:#c0c0c0;"></div>
<span class="t" style="top:198.00px;line-height:18px;font-size:14px;color:#262626;left:1206.45px;">N</span>
<div style="left:1319px;top:197px;width:1px;height:19px;background:#c0c0c0;"></div>
<span class="t" style="top:198.00px;line-height:18px;font-size:14px;color:#262626;left:1278.05px;">O</span>
<div style="left:1391px;top:197px;width:1px;height:19px;background:#c0c0c0;"></div>
<span class="t" style="top:198.00px;line-height:18px;font-size:14px;color:#262626;left:1350.83px;">P</span>
<div style="left:1463px;top:197px;width:1px;height:19px;background:#c0c0c0;"></div>
<span class="t" style="top:198.00px;line-height:18px;font-size:14px;color:#262626;left:1422.05px;">Q</span>
<div style="left:1535px;top:197px;width:1px;height:19px;background:#c0c0c0;"></div>
<span class="t" style="top:198.00px;line-height:18px;font-size:14px;color:#262626;left:1494.45px;">R</span>
<div style="left:1607px;top:197px;width:1px;height:19px;background:#c0c0c0;"></div>
<span class="t" style="top:198.00px;line-height:18px;font-size:14px;color:#262626;left:1566.83px;">S</span>
<div style="left:28px;top:197px;width:1px;height:19px;background:#c0c0c0;"></div>
<svg style="left:13px;top:200px;" width="13" height="13" viewBox="0 0 13 13"><path d="M12.4 0.6V12.4H0.6Z" fill="#b4b4b4"/></svg>
<div style="left:0px;top:217px;width:28px;height:773px;background:#e6e6e6;"></div>
<div style="left:28px;top:217px;width:1px;height:773px;background:#9e9e9e;"></div>
<div style="left:0px;top:237px;width:28px;height:1px;background:#b1b1b1;"></div>
<span class="t" style="top:219.00px;line-height:18px;font-size:14px;color:#262626;left:10.11px;">1</span>
<div style="left:0px;top:258px;width:28px;height:1px;background:#b1b1b1;"></div>
<span class="t" style="top:240.00px;line-height:18px;font-size:14px;color:#262626;left:10.11px;">2</span>
<div style="left:0px;top:279px;width:28px;height:1px;background:#b1b1b1;"></div>
<span class="t" style="top:261.00px;line-height:18px;font-size:14px;color:#262626;left:10.11px;">3</span>
<div style="left:0px;top:300px;width:28px;height:1px;background:#b1b1b1;"></div>
<span class="t" style="top:282.00px;line-height:18px;font-size:14px;color:#262626;left:10.11px;">4</span>
<div style="left:0px;top:321px;width:28px;height:1px;background:#b1b1b1;"></div>
<span class="t" style="top:303.00px;line-height:18px;font-size:14px;color:#262626;left:10.11px;">5</span>
<div style="left:0px;top:342px;width:28px;height:1px;background:#b1b1b1;"></div>
<span class="t" style="top:324.00px;line-height:18px;font-size:14px;color:#262626;left:10.11px;">6</span>
<div style="left:0px;top:343px;width:28px;height:20px;background:#d2d2d2;"></div>
<div style="left:27px;top:342px;width:2px;height:22px;background:#217346;"></div>
<div style="left:0px;top:363px;width:28px;height:1px;background:#b1b1b1;"></div>
<span class="t" style="top:345.00px;line-height:18px;font-size:14px;color:#217346;left:10.11px;">7</span>
<div style="left:0px;top:384px;width:28px;height:1px;background:#b1b1b1;"></div>
<span class="t" style="top:366.00px;line-height:18px;font-size:14px;color:#262626;left:10.11px;">8</span>
<div style="left:0px;top:405px;width:28px;height:1px;background:#b1b1b1;"></div>
<span class="t" style="top:387.00px;line-height:18px;font-size:14px;color:#262626;left:10.11px;">9</span>
<div style="left:0px;top:426px;width:28px;height:1px;background:#b1b1b1;"></div>
<span class="t" style="top:408.00px;line-height:18px;font-size:14px;color:#262626;left:6.21px;">10</span>
<div style="left:0px;top:447px;width:28px;height:1px;background:#b1b1b1;"></div>
<span class="t" style="top:429.00px;line-height:18px;font-size:14px;color:#262626;left:6.73px;">11</span>
<div style="left:0px;top:468px;width:28px;height:1px;background:#b1b1b1;"></div>
<span class="t" style="top:450.00px;line-height:18px;font-size:14px;color:#262626;left:6.21px;">12</span>
<div style="left:0px;top:489px;width:28px;height:1px;background:#b1b1b1;"></div>
<span class="t" style="top:471.00px;line-height:18px;font-size:14px;color:#262626;left:6.21px;">13</span>
<div style="left:0px;top:510px;width:28px;height:1px;background:#b1b1b1;"></div>
<span class="t" style="top:492.00px;line-height:18px;font-size:14px;color:#262626;left:6.21px;">14</span>
<div style="left:0px;top:531px;width:28px;height:1px;background:#b1b1b1;"></div>
<span class="t" style="top:513.00px;line-height:18px;font-size:14px;color:#262626;left:6.21px;">15</span>
<div style="left:0px;top:552px;width:28px;height:1px;background:#b1b1b1;"></div>
<span class="t" style="top:534.00px;line-height:18px;font-size:14px;color:#262626;left:6.21px;">16</span>
<div style="left:0px;top:573px;width:28px;height:1px;background:#b1b1b1;"></div>
<span class="t" style="top:555.00px;line-height:18px;font-size:14px;color:#262626;left:6.21px;">17</span>
<div style="left:0px;top:594px;width:28px;height:1px;background:#b1b1b1;"></div>
<span class="t" style="top:576.00px;line-height:18px;font-size:14px;color:#262626;left:6.21px;">18</span>
<div style="left:0px;top:615px;width:28px;height:1px;background:#b1b1b1;"></div>
<span class="t" style="top:597.00px;line-height:18px;font-size:14px;color:#262626;left:6.21px;">19</span>
<div style="left:0px;top:636px;width:28px;height:1px;background:#b1b1b1;"></div>
<span class="t" style="top:618.00px;line-height:18px;font-size:14px;color:#262626;left:6.21px;">20</span>
<div style="left:0px;top:657px;width:28px;height:1px;background:#b1b1b1;"></div>
<span class="t" style="top:639.00px;line-height:18px;font-size:14px;color:#262626;left:6.21px;">21</span>
<div style="left:0px;top:678px;width:28px;height:1px;background:#b1b1b1;"></div>
<span class="t" style="top:660.00px;line-height:18px;font-size:14px;color:#262626;left:6.21px;">22</span>
<div style="left:0px;top:699px;width:28px;height:1px;background:#b1b1b1;"></div>
<span class="t" style="top:681.00px;line-height:18px;font-size:14px;color:#262626;left:6.21px;">23</span>
<div style="left:0px;top:720px;width:28px;height:1px;background:#b1b1b1;"></div>
<span class="t" style="top:702.00px;line-height:18px;font-size:14px;color:#262626;left:6.21px;">24</span>
<div style="left:0px;top:741px;width:28px;height:1px;background:#b1b1b1;"></div>
<span class="t" style="top:723.00px;line-height:18px;font-size:14px;color:#262626;left:6.21px;">25</span>
<div style="left:0px;top:762px;width:28px;height:1px;background:#b1b1b1;"></div>
<span class="t" style="top:744.00px;line-height:18px;font-size:14px;color:#262626;left:6.21px;">26</span>
<div style="left:0px;top:783px;width:28px;height:1px;background:#b1b1b1;"></div>
<span class="t" style="top:765.00px;line-height:18px;font-size:14px;color:#262626;left:6.21px;">27</span>
<div style="left:0px;top:804px;width:28px;height:1px;background:#b1b1b1;"></div>
<span class="t" style="top:786.00px;line-height:18px;font-size:14px;color:#262626;left:6.21px;">28</span>
<div style="left:0px;top:825px;width:28px;height:1px;background:#b1b1b1;"></div>
<span class="t" style="top:807.00px;line-height:18px;font-size:14px;color:#262626;left:6.21px;">29</span>
<div style="left:0px;top:846px;width:28px;height:1px;background:#b1b1b1;"></div>
<span class="t" style="top:828.00px;line-height:18px;font-size:14px;color:#262626;left:6.21px;">30</span>
<div style="left:0px;top:867px;width:28px;height:1px;background:#b1b1b1;"></div>
<span class="t" style="top:849.00px;line-height:18px;font-size:14px;color:#262626;left:6.21px;">31</span>
<div style="left:0px;top:888px;width:28px;height:1px;background:#b1b1b1;"></div>
<span class="t" style="top:870.00px;line-height:18px;font-size:14px;color:#262626;left:6.21px;">32</span>
<div style="left:0px;top:909px;width:28px;height:1px;background:#b1b1b1;"></div>
<span class="t" style="top:891.00px;line-height:18px;font-size:14px;color:#262626;left:6.21px;">33</span>
<div style="left:0px;top:930px;width:28px;height:1px;background:#b1b1b1;"></div>
<span class="t" style="top:912.00px;line-height:18px;font-size:14px;color:#262626;left:6.21px;">34</span>
<div style="left:0px;top:951px;width:28px;height:1px;background:#b1b1b1;"></div>
<span class="t" style="top:933.00px;line-height:18px;font-size:14px;color:#262626;left:6.21px;">35</span>
<div style="left:0px;top:972px;width:28px;height:1px;background:#b1b1b1;"></div>
<span class="t" style="top:954.00px;line-height:18px;font-size:14px;color:#262626;left:6.21px;">36</span>
<span class="t" style="top:975.00px;line-height:18px;font-size:14px;color:#262626;left:6.21px;">37</span>
<div style="left:29px;top:363px;width:498px;height:358px;background:#fff;background:repeating-linear-gradient(to bottom,#fff 0,#fff 20px,#eef2e2 20px,#eef2e2 21px);background-position:0 1px;"></div>
<div style="left:29px;top:805px;width:498px;height:20px;background:#fff;"></div>
<div style="left:29px;top:258px;width:498px;height:21px;background:#76923c;"></div>
<div style="left:293px;top:258px;width:94px;height:21px;background:#c6efce;"></div>
<div style="left:29px;top:279px;width:498px;height:1px;background:#e3ebcf;"></div>
<span class="t" style="top:260.50px;line-height:19px;font-size:14.5px;color:#fff;letter-spacing:-0.376px;left:32.00px;">Row Labels</span>
<span class="t" style="top:260.50px;line-height:19px;font-size:14.5px;color:#fff;letter-spacing:-0.436px;left:200.00px;">Sum of Sales</span>
<span class="t" style="top:260.50px;line-height:19px;font-size:14.5px;color:#006100;letter-spacing:-0.061px;left:295.00px;">Sum of Profit</span>
<span class="t" style="top:260.50px;line-height:19px;font-size:14.5px;color:#fff;letter-spacing:0.011px;left:390.00px;">Average of Discount</span>
<div style="left:180px;top:261px;width:17px;height:17px;background:linear-gradient(#ffffff,#e4e4e4);border:1px solid #b5b5b5;box-sizing:border-box;"></div>
<svg style="left:182px;top:263px;" width="13" height="13" viewBox="0 0 13 13"><path d="M1.2 7.4H6.2L3.7 10.2Z" fill="#555"/><path d="M9.6 1.6V10.4M7.8 8.4L9.6 10.4L11.4 8.4" fill="none" stroke="#444" stroke-width="1"/></svg>
<div style="left:29px;top:279px;width:498px;height:21px;background:#c4d79b;"></div>
<div style="left:29px;top:279px;width:498px;height:1px;background:#b5cc84;"></div>
<svg style="left:34px;top:287.5px;" width="9" height="9" viewBox="0 0 9 9"><rect x="0.5" y="0.5" width="8" height="8" rx="1" fill="#e9edf6" stroke="#7f8db0"/><path d="M2.4 4.5H6.6" stroke="#3b4f80" stroke-width="1.1"/></svg>
<span class="t" style="top:281.50px;line-height:19px;font-size:14.5px;color:#fff;letter-spacing:0.000px;left:45.60px;">Central</span>
<span class="t" style="top:281.50px;line-height:19px;font-size:14.5px;color:#fff;left:206.42px;">487232.9114</span>
<span class="t" style="top:281.50px;line-height:19px;font-size:14.5px;color:#fff;left:308.41px;">43340.7899</span>
<span class="t" style="top:281.50px;line-height:19px;font-size:14.5px;color:#fff;left:495.98px;">24%</span>
<div style="left:29px;top:300px;width:498px;height:21px;background:#ebf1de;"></div>
<svg style="left:51px;top:308.5px;" width="9" height="9" viewBox="0 0 9 9"><rect x="0.5" y="0.5" width="8" height="8" rx="1" fill="#e9edf6" stroke="#7f8db0"/><path d="M2.4 4.5H6.6" stroke="#3b4f80" stroke-width="1.1"/><path d="M4.5 2.4V6.6" stroke="#3b4f80" stroke-width="1.1"/></svg>
<span class="t" style="top:302.50px;line-height:19px;font-size:14.5px;color:#000;letter-spacing:0.112px;left:62.50px;">Kelly Williams</span>
<span class="t" style="top:302.50px;line-height:19px;font-size:14.5px;color:#000;left:206.42px;">487232.9114</span>
<span class="t" style="top:302.50px;line-height:19px;font-size:14.5px;color:#000;left:308.41px;">43340.7899</span>
<span class="t" style="top:302.50px;line-height:19px;font-size:14.5px;color:#000;left:495.98px;">24%</span>
<div style="left:29px;top:321px;width:498px;height:21px;background:#c4d79b;"></div>
<div style="left:29px;top:321px;width:498px;height:1px;background:#b5cc84;"></div>
<svg style="left:34px;top:329.5px;" width="9" height="9" viewBox="0 0 9 9"><rect x="0.5" y="0.5" width="8" height="8" rx="1" fill="#e9edf6" stroke="#7f8db0"/><path d="M2.4 4.5H6.6" stroke="#3b4f80" stroke-width="1.1"/></svg>
<span class="t" style="top:323.50px;line-height:19px;font-size:14.5px;color:#fff;letter-spacing:0.000px;left:45.60px;">East</span>
<span class="t" style="top:323.50px;line-height:19px;font-size:14.5px;color:#fff;left:213.41px;">637076.096</span>
<span class="t" style="top:323.50px;line-height:19px;font-size:14.5px;color:#fff;left:308.41px;">86537.9794</span>
<span class="t" style="top:323.50px;line-height:19px;font-size:14.5px;color:#fff;left:495.98px;">15%</span>
<div style="left:29px;top:342px;width:498px;height:21px;background:#ebf1de;"></div>
<svg style="left:51px;top:350.5px;" width="9" height="9" viewBox="0 0 9 9"><rect x="0.5" y="0.5" width="8" height="8" rx="1" fill="#e9edf6" stroke="#7f8db0"/><path d="M2.4 4.5H6.6" stroke="#3b4f80" stroke-width="1.1"/></svg>
<span class="t" style="top:344.50px;line-height:19px;font-size:14.5px;color:#000;letter-spacing:-0.223px;left:62.50px;">Chuck Magee</span>
<span class="t" style="top:344.50px;line-height:19px;font-size:14.5px;color:#000;left:213.41px;">637076.096</span>
<span class="t" style="top:344.50px;line-height:19px;font-size:14.5px;color:#000;left:308.41px;">86537.9794</span>
<span class="t" style="top:344.50px;line-height:19px;font-size:14.5px;color:#000;left:495.98px;">15%</span>
<span class="t" style="top:365.50px;line-height:19px;font-size:14.5px;color:#000;letter-spacing:-0.161px;left:79.40px;">Tables</span>
<span class="t" style="top:365.50px;line-height:19px;font-size:14.5px;color:#000;left:221.47px;">35748.903</span>
<span class="t" style="top:365.50px;line-height:19px;font-size:14.5px;color:#000;left:311.64px;">-10020.085</span>
<span class="t" style="top:365.50px;line-height:19px;font-size:14.5px;color:#000;left:495.98px;">38%</span>
<span class="t" style="top:386.50px;line-height:19px;font-size:14.5px;color:#000;letter-spacing:-0.160px;left:79.40px;">Supplies</span>
<span class="t" style="top:386.50px;line-height:19px;font-size:14.5px;color:#000;left:221.47px;">10390.526</span>
<span class="t" style="top:386.50px;line-height:19px;font-size:14.5px;color:#000;left:312.72px;">-1164.6582</span>
<span class="t" style="top:386.50px;line-height:19px;font-size:14.5px;color:#000;left:504.04px;">7%</span>
<span class="t" style="top:407.50px;line-height:19px;font-size:14.5px;color:#000;letter-spacing:-0.181px;left:79.40px;">Bookcases</span>
<span class="t" style="top:407.50px;line-height:19px;font-size:14.5px;color:#000;left:221.47px;">42819.976</span>
<span class="t" style="top:407.50px;line-height:19px;font-size:14.5px;color:#000;left:319.71px;">-934.3072</span>
<span class="t" style="top:407.50px;line-height:19px;font-size:14.5px;color:#000;left:495.98px;">22%</span>
<span class="t" style="top:428.50px;line-height:19px;font-size:14.5px;color:#000;letter-spacing:-0.165px;left:79.40px;">Fasteners</span>
<span class="t" style="top:428.50px;line-height:19px;font-size:14.5px;color:#000;left:237.60px;">798.094</span>
<span class="t" style="top:428.50px;line-height:19px;font-size:14.5px;color:#000;left:324.54px;">255.1324</span>
<span class="t" style="top:428.50px;line-height:19px;font-size:14.5px;color:#000;left:504.04px;">9%</span>
<span class="t" style="top:449.50px;line-height:19px;font-size:14.5px;color:#000;letter-spacing:-0.164px;left:79.40px;">Labels</span>
<span class="t" style="top:449.50px;line-height:19px;font-size:14.5px;color:#000;left:229.54px;">2579.254</span>
<span class="t" style="top:449.50px;line-height:19px;font-size:14.5px;color:#000;left:341.73px;">1120.4</span>
<span class="t" style="top:449.50px;line-height:19px;font-size:14.5px;color:#000;left:504.04px;">7%</span>
<span class="t" style="top:470.50px;line-height:19px;font-size:14.5px;color:#000;letter-spacing:-0.173px;left:79.40px;">Envelopes</span>
<span class="t" style="top:470.50px;line-height:19px;font-size:14.5px;color:#000;left:229.54px;">4244.054</span>
<span class="t" style="top:470.50px;line-height:19px;font-size:14.5px;color:#000;left:316.47px;">1752.1606</span>
<span class="t" style="top:470.50px;line-height:19px;font-size:14.5px;color:#000;left:504.04px;">8%</span>
<span class="t" style="top:491.50px;line-height:19px;font-size:14.5px;color:#000;letter-spacing:-0.142px;left:79.40px;">Art</span>
<span class="t" style="top:491.50px;line-height:19px;font-size:14.5px;color:#000;left:229.54px;">7313.752</span>
<span class="t" style="top:491.50px;line-height:19px;font-size:14.5px;color:#000;left:316.47px;">1854.1943</span>
<span class="t" style="top:491.50px;line-height:19px;font-size:14.5px;color:#000;left:504.04px;">7%</span>
<span class="t" style="top:512.50px;line-height:19px;font-size:14.5px;color:#000;letter-spacing:-0.157px;left:79.40px;">Furnishings</span>
<span class="t" style="top:512.50px;line-height:19px;font-size:14.5px;color:#000;left:229.54px;">28177.78</span>
<span class="t" style="top:512.50px;line-height:19px;font-size:14.5px;color:#000;left:324.54px;">5654.305</span>
<span class="t" style="top:512.50px;line-height:19px;font-size:14.5px;color:#000;left:504.04px;">8%</span>
<span class="t" style="top:533.50px;line-height:19px;font-size:14.5px;color:#000;letter-spacing:-0.178px;left:79.40px;">Machines</span>
<span class="t" style="top:533.50px;line-height:19px;font-size:14.5px;color:#000;left:221.47px;">61536.223</span>
<span class="t" style="top:533.50px;line-height:19px;font-size:14.5px;color:#000;left:316.47px;">6962.4487</span>
<span class="t" style="top:533.50px;line-height:19px;font-size:14.5px;color:#000;left:495.98px;">25%</span>
<span class="t" style="top:554.50px;line-height:19px;font-size:14.5px;color:#000;letter-spacing:-0.167px;left:79.40px;">Storage</span>
<span class="t" style="top:554.50px;line-height:19px;font-size:14.5px;color:#000;left:221.47px;">68400.632</span>
<span class="t" style="top:554.50px;line-height:19px;font-size:14.5px;color:#000;left:316.47px;">7835.7828</span>
<span class="t" style="top:554.50px;line-height:19px;font-size:14.5px;color:#000;left:504.04px;">7%</span>
<span class="t" style="top:575.50px;line-height:19px;font-size:14.5px;color:#000;letter-spacing:-0.163px;left:79.40px;">Appliances</span>
<span class="t" style="top:575.50px;line-height:19px;font-size:14.5px;color:#000;left:221.47px;">33161.686</span>
<span class="t" style="top:575.50px;line-height:19px;font-size:14.5px;color:#000;left:324.54px;">8068.803</span>
<span class="t" style="top:575.50px;line-height:19px;font-size:14.5px;color:#000;left:504.04px;">8%</span>
<span class="t" style="top:596.50px;line-height:19px;font-size:14.5px;color:#000;letter-spacing:-0.178px;left:79.40px;">Paper</span>
<span class="t" style="top:596.50px;line-height:19px;font-size:14.5px;color:#000;left:221.47px;">18403.136</span>
<span class="t" style="top:596.50px;line-height:19px;font-size:14.5px;color:#000;left:316.47px;">8195.5269</span>
<span class="t" style="top:596.50px;line-height:19px;font-size:14.5px;color:#000;left:504.04px;">7%</span>
<span class="t" style="top:617.50px;line-height:19px;font-size:14.5px;color:#000;letter-spacing:-0.161px;left:79.40px;">Chairs</span>
<span class="t" style="top:617.50px;line-height:19px;font-size:14.5px;color:#000;left:221.47px;">87731.763</span>
<span class="t" style="top:617.50px;line-height:19px;font-size:14.5px;color:#000;left:316.47px;">8218.8028</span>
<span class="t" style="top:617.50px;line-height:19px;font-size:14.5px;color:#000;left:495.98px;">15%</span>
<span class="t" style="top:638.50px;line-height:19px;font-size:14.5px;color:#000;letter-spacing:-0.163px;left:79.40px;">Accessories</span>
<span class="t" style="top:638.50px;line-height:19px;font-size:14.5px;color:#000;left:237.60px;">42310.1</span>
<span class="t" style="top:638.50px;line-height:19px;font-size:14.5px;color:#000;left:308.41px;">10617.2409</span>
<span class="t" style="top:638.50px;line-height:19px;font-size:14.5px;color:#000;left:504.04px;">9%</span>
<span class="t" style="top:659.50px;line-height:19px;font-size:14.5px;color:#000;letter-spacing:-0.162px;left:79.40px;">Binders</span>
<span class="t" style="top:659.50px;line-height:19px;font-size:14.5px;color:#000;left:221.47px;">52388.729</span>
<span class="t" style="top:659.50px;line-height:19px;font-size:14.5px;color:#000;left:308.41px;">10931.7143</span>
<span class="t" style="top:659.50px;line-height:19px;font-size:14.5px;color:#000;left:495.98px;">35%</span>
<span class="t" style="top:680.50px;line-height:19px;font-size:14.5px;color:#000;letter-spacing:-0.188px;left:79.40px;">Phones</span>
<span class="t" style="top:680.50px;line-height:19px;font-size:14.5px;color:#000;left:221.47px;">91531.954</span>
<span class="t" style="top:680.50px;line-height:19px;font-size:14.5px;color:#000;left:325.61px;">11512.65</span>
<span class="t" style="top:680.50px;line-height:19px;font-size:14.5px;color:#000;left:495.98px;">16%</span>
<span class="t" style="top:701.50px;line-height:19px;font-size:14.5px;color:#000;letter-spacing:-0.164px;left:79.40px;">Copiers</span>
<span class="t" style="top:701.50px;line-height:19px;font-size:14.5px;color:#000;left:221.47px;">49539.534</span>
<span class="t" style="top:701.50px;line-height:19px;font-size:14.5px;color:#000;left:308.41px;">15677.8681</span>
<span class="t" style="top:701.50px;line-height:19px;font-size:14.5px;color:#000;left:495.98px;">26%</span>
<div style="left:29px;top:720px;width:498px;height:21px;background:#c4d79b;"></div>
<div style="left:29px;top:720px;width:498px;height:1px;background:#b5cc84;"></div>
<svg style="left:34px;top:728.5px;" width="9" height="9" viewBox="0 0 9 9"><rect x="0.5" y="0.5" width="8" height="8" rx="1" fill="#e9edf6" stroke="#7f8db0"/><path d="M2.4 4.5H6.6" stroke="#3b4f80" stroke-width="1.1"/></svg>
<span class="t" style="top:722.50px;line-height:19px;font-size:14.5px;color:#fff;letter-spacing:0.000px;left:45.60px;">South</span>
<span class="t" style="top:722.50px;line-height:19px;font-size:14.5px;color:#fff;left:213.41px;">374412.808</span>
<span class="t" style="top:722.50px;line-height:19px;font-size:14.5px;color:#fff;left:308.41px;">44530.8198</span>
<span class="t" style="top:722.50px;line-height:19px;font-size:14.5px;color:#fff;left:495.98px;">15%</span>
<div style="left:29px;top:741px;width:498px;height:21px;background:#ebf1de;"></div>
<svg style="left:51px;top:749.5px;" width="9" height="9" viewBox="0 0 9 9"><rect x="0.5" y="0.5" width="8" height="8" rx="1" fill="#e9edf6" stroke="#7f8db0"/><path d="M2.4 4.5H6.6" stroke="#3b4f80" stroke-width="1.1"/><path d="M4.5 2.4V6.6" stroke="#3b4f80" stroke-width="1.1"/></svg>
<span class="t" style="top:743.50px;line-height:19px;font-size:14.5px;color:#000;letter-spacing:-0.168px;left:62.50px;">Cassandra Brandow</span>
<span class="t" style="top:743.50px;line-height:19px;font-size:14.5px;color:#000;left:213.41px;">374412.808</span>
<span class="t" style="top:743.50px;line-height:19px;font-size:14.5px;color:#000;left:308.41px;">44530.8198</span>
<span class="t" style="top:743.50px;line-height:19px;font-size:14.5px;color:#000;left:495.98px;">15%</span>
<div style="left:29px;top:762px;width:498px;height:21px;background:#c4d79b;"></div>
<div style="left:29px;top:762px;width:498px;height:1px;background:#b5cc84;"></div>
<svg style="left:34px;top:770.5px;" width="9" height="9" viewBox="0 0 9 9"><rect x="0.5" y="0.5" width="8" height="8" rx="1" fill="#e9edf6" stroke="#7f8db0"/><path d="M2.4 4.5H6.6" stroke="#3b4f80" stroke-width="1.1"/></svg>
<span class="t" style="top:764.50px;line-height:19px;font-size:14.5px;color:#fff;letter-spacing:0.000px;left:45.60px;">West</span>
<span class="t" style="top:764.50px;line-height:19px;font-size:14.5px;color:#fff;left:213.41px;">617974.767</span>
<span class="t" style="top:764.50px;line-height:19px;font-size:14.5px;color:#fff;left:309.48px;">88755.0711</span>
<span class="t" style="top:764.50px;line-height:19px;font-size:14.5px;color:#fff;left:497.05px;">11%</span>
<div style="left:29px;top:783px;width:498px;height:21px;background:#ebf1de;"></div>
<svg style="left:51px;top:791.5px;" width="9" height="9" viewBox="0 0 9 9"><rect x="0.5" y="0.5" width="8" height="8" rx="1" fill="#e9edf6" stroke="#7f8db0"/><path d="M2.4 4.5H6.6" stroke="#3b4f80" stroke-width="1.1"/><path d="M4.5 2.4V6.6" stroke="#3b4f80" stroke-width="1.1"/></svg>
<span class="t" style="top:785.50px;line-height:19px;font-size:14.5px;color:#000;letter-spacing:-0.025px;left:62.50px;">Anna Andreadi</span>
<span class="t" style="top:785.50px;line-height:19px;font-size:14.5px;color:#000;left:213.41px;">617974.767</span>
<span class="t" style="top:785.50px;line-height:19px;font-size:14.5px;color:#000;left:309.48px;">88755.0711</span>
<span class="t" style="top:785.50px;line-height:19px;font-size:14.5px;color:#000;left:497.05px;">11%</span>
<div style="left:29px;top:363px;width:498px;height:1px;background:#c9d9a6;"></div>
<div style="left:29px;top:802px;width:498px;height:1px;background:#76923c;"></div>
<div style="left:29px;top:804px;width:498px;height:1px;background:#76923c;"></div>
<span class="t" style="top:806.50px;line-height:19px;font-size:14.5px;color:#000;font-weight:700;left:31.00px;">Grand Total</span>
<span class="t" style="top:806.50px;line-height:19px;font-size:14.5px;color:#000;font-weight:700;left:206.15px;">2116696.582</span>
<span class="t" style="top:806.50px;line-height:19px;font-size:14.5px;color:#000;font-weight:700;left:300.35px;">263164.6602</span>
<span class="t" style="top:806.50px;line-height:19px;font-size:14.5px;color:#000;font-weight:700;left:495.98px;">16%</span>
<div style="left:28px;top:342px;width:171px;height:23px;border:2px solid #217346;box-sizing:border-box;"></div>
<div style="left:194px;top:360px;width:5px;height:5px;background:#217346;border:1px solid #fff;box-sizing:content-box;"></div>
<div style="left:1637px;top:216px;width:1px;height:775px;background:#a6a6a6;"></div>
<div style="left:0px;top:990px;width:1638px;height:1px;background:#a6a6a6;"></div>
<div style="left:637px;top:468px;width:481px;height:290px;background:#fff;border:1px solid #d9d9d9;box-sizing:border-box;"></div>
<div style="left:648px;top:477px;width:69px;height:17px;background:linear-gradient(#e9e9e9,#cfcfcf);border:1px solid #d2d2d2;box-sizing:border-box;"></div>
<span class="t" style="top:478.80px;line-height:14px;font-size:11px;color:#111;letter-spacing:-0.326px;left:652.00px;">Sum of Sales</span>
<div style="left:718px;top:477px;width:69px;height:17px;background:linear-gradient(#e9e9e9,#cfcfcf);border:1px solid #d2d2d2;box-sizing:border-box;"></div>
<span class="t" style="top:478.80px;line-height:14px;font-size:11px;color:#111;letter-spacing:-0.082px;left:722.00px;">Sum of Profit</span>
<div style="left:788px;top:477px;width:102px;height:17px;background:linear-gradient(#e9e9e9,#cfcfcf);border:1px solid #d2d2d2;box-sizing:border-box;"></div>
<span class="t" style="top:478.80px;line-height:14px;font-size:11px;color:#111;letter-spacing:-0.176px;left:792.00px;">Average of Discount</span>
<div style="left:648px;top:731px;width:54px;height:17px;background:linear-gradient(#e9e9e9,#cfcfcf);border:1px solid #d2d2d2;box-sizing:border-box;"></div>
<span class="t" style="top:732.80px;line-height:14px;font-size:11px;color:#111;letter-spacing:-0.393px;left:652.00px;">Region</span>
<svg style="left:688.75px;top:737.4px" width="7.5" height="5.2" viewBox="-1 -1 7.5 5.2"><path d="M0 0H5.5L2.75 3.2Z" fill="#444"/></svg>
<div style="left:703px;top:731px;width:113px;height:17px;background:linear-gradient(#e9e9e9,#cfcfcf);border:1px solid #d2d2d2;box-sizing:border-box;"></div>
<span class="t" style="top:732.80px;line-height:14px;font-size:11px;color:#111;letter-spacing:-0.333px;left:707.00px;">NewColumn.Person</span>
<svg style="left:802.75px;top:737.4px" width="7.5" height="5.2" viewBox="-1 -1 7.5 5.2"><path d="M0 0H5.5L2.75 3.2Z" fill="#444"/></svg>
<div style="left:817px;top:731px;width:85px;height:17px;background:linear-gradient(#e9e9e9,#cfcfcf);border:1px solid #d2d2d2;box-sizing:border-box;"></div>
<span class="t" style="top:732.80px;line-height:14px;font-size:11px;color:#111;letter-spacing:-0.281px;left:821.00px;">Sub-Category</span>
<svg style="left:888.75px;top:737.4px" width="7.5" height="5.2" viewBox="-1 -1 7.5 5.2"><path d="M0 0H5.5L2.75 3.2Z" fill="#444"/></svg>
<div style="left:1075px;top:731px;width:14.5px;height:17px;background:linear-gradient(#dcdcdc,#c4c4c4);"></div>
<div style="left:1091px;top:731px;width:14.5px;height:17px;background:linear-gradient(#dcdcdc,#c4c4c4);"></div>
<div style="left:1078px;top:739px;width:9px;height:1.6px;background:#9a9a9a;"></div>
<div style="left:1081.7px;top:735.3px;width:1.6px;height:9px;background:#9a9a9a;"></div>
<div style="left:1094px;top:739px;width:9px;height:1.6px;background:#9a9a9a;"></div>
<span class="t" style="top:502.00px;line-height:14px;font-size:11px;color:#595959;letter-spacing:-0.245px;left:650.76px;">700000</span>
<span class="t" style="top:502.00px;line-height:14px;font-size:11px;color:#595959;letter-spacing:-0.294px;left:940.00px;">40%</span>
<span class="t" style="top:514.71px;line-height:14px;font-size:11px;color:#595959;letter-spacing:-0.245px;left:650.76px;">600000</span>
<span class="t" style="top:514.71px;line-height:14px;font-size:11px;color:#595959;letter-spacing:-0.294px;left:940.00px;">35%</span>
<span class="t" style="top:527.42px;line-height:14px;font-size:11px;color:#595959;letter-spacing:-0.245px;left:650.76px;">500000</span>
<span class="t" style="top:527.42px;line-height:14px;font-size:11px;color:#595959;letter-spacing:-0.294px;left:940.00px;">30%</span>
<span class="t" style="top:540.14px;line-height:14px;font-size:11px;color:#595959;letter-spacing:-0.245px;left:650.76px;">400000</span>
<span class="t" style="top:540.14px;line-height:14px;font-size:11px;color:#595959;letter-spacing:-0.294px;left:940.00px;">25%</span>
<span class="t" style="top:552.85px;line-height:14px;font-size:11px;color:#595959;letter-spacing:-0.245px;left:650.76px;">300000</span>
<span class="t" style="top:552.85px;line-height:14px;font-size:11px;color:#595959;letter-spacing:-0.294px;left:940.00px;">20%</span>
<span class="t" style="top:565.56px;line-height:14px;font-size:11px;color:#595959;letter-spacing:-0.245px;left:650.76px;">200000</span>
<span class="t" style="top:565.56px;line-height:14px;font-size:11px;color:#595959;letter-spacing:-0.294px;left:940.00px;">15%</span>
<span class="t" style="top:578.28px;line-height:14px;font-size:11px;color:#595959;letter-spacing:-0.245px;left:650.76px;">100000</span>
<span class="t" style="top:578.28px;line-height:14px;font-size:11px;color:#595959;letter-spacing:-0.294px;left:940.00px;">10%</span>
<span class="t" style="top:590.99px;line-height:14px;font-size:11px;color:#595959;left:679.88px;">0</span>
<span class="t" style="top:590.99px;line-height:14px;font-size:11px;color:#595959;letter-spacing:-0.318px;left:940.00px;">5%</span>
<span class="t" style="top:603.70px;line-height:14px;font-size:11px;color:#595959;letter-spacing:-0.231px;left:647.25px;">-100000</span>
<span class="t" style="top:603.70px;line-height:14px;font-size:11px;color:#595959;letter-spacing:-0.318px;left:940.00px;">0%</span>
<svg style="left:0;top:0" width="1928" height="1048" viewBox="0 0 1928 1048"><path d="M697.5 509.00H928.75" stroke="#d9d9d9" stroke-width="1"/><path d="M697.5 521.71H928.75" stroke="#d9d9d9" stroke-width="1"/><path d="M697.5 534.42H928.75" stroke="#d9d9d9" stroke-width="1"/><path d="M697.5 547.14H928.75" stroke="#d9d9d9" stroke-width="1"/><path d="M697.5 559.85H928.75" stroke="#d9d9d9" stroke-width="1"/><path d="M697.5 572.56H928.75" stroke="#d9d9d9" stroke-width="1"/><path d="M697.5 585.28H928.75" stroke="#d9d9d9" stroke-width="1"/><path d="M697.5 597.99H928.75" stroke="#d9d9d9" stroke-width="1"/><path d="M697.5 610.70H928.75" stroke="#d9d9d9" stroke-width="1"/><path d="M697.5 598.0V724.5" stroke="#d9d9d9" stroke-width="1"/><path d="M709.5 598.0V724.5" stroke="#d9d9d9" stroke-width="1"/><path d="M905.75 598.0V724.5" stroke="#d9d9d9" stroke-width="1"/><path d="M917.5 598.0V724.5" stroke="#d9d9d9" stroke-width="1"/><path d="M928.75 598.0V724.5" stroke="#d9d9d9" stroke-width="1"/><rect x="700.08" y="536.05" width="2.6" height="61.95" fill="#4f81bd"/><rect x="700.88" y="536.05" width="0.9" height="61.95" fill="#9dbbe0"/><rect x="702.88" y="592.49" width="2.6" height="5.51" fill="#c0504d"/><rect x="711.64" y="593.45" width="2.6" height="4.55" fill="#4f81bd"/><rect x="712.44" y="593.45" width="0.9" height="4.55" fill="#9dbbe0"/><rect x="714.44" y="598.00" width="2.6" height="1.27" fill="#c0504d"/><rect x="723.21" y="596.68" width="2.6" height="1.32" fill="#4f81bd"/><rect x="724.01" y="596.68" width="0.9" height="1.32" fill="#9dbbe0"/><rect x="726.01" y="598.00" width="2.6" height="0.15" fill="#c0504d"/><rect x="734.77" y="592.56" width="2.6" height="5.44" fill="#4f81bd"/><rect x="735.57" y="592.56" width="0.9" height="5.44" fill="#9dbbe0"/><rect x="737.57" y="598.00" width="2.6" height="0.12" fill="#c0504d"/><rect x="746.33" y="597.90" width="2.6" height="0.10" fill="#4f81bd"/><rect x="747.13" y="597.90" width="0.9" height="0.10" fill="#9dbbe0"/><rect x="749.13" y="597.97" width="2.6" height="0.03" fill="#c0504d"/><rect x="757.89" y="597.67" width="2.6" height="0.33" fill="#4f81bd"/><rect x="758.69" y="597.67" width="0.9" height="0.33" fill="#9dbbe0"/><rect x="760.69" y="597.86" width="2.6" height="0.14" fill="#c0504d"/><rect x="769.46" y="597.46" width="2.6" height="0.54" fill="#4f81bd"/><rect x="770.26" y="597.46" width="0.9" height="0.54" fill="#9dbbe0"/><rect x="772.26" y="597.78" width="2.6" height="0.22" fill="#c0504d"/><rect x="781.02" y="597.07" width="2.6" height="0.93" fill="#4f81bd"/><rect x="781.82" y="597.07" width="0.9" height="0.93" fill="#9dbbe0"/><rect x="783.82" y="597.76" width="2.6" height="0.24" fill="#c0504d"/><rect x="792.58" y="594.42" width="2.6" height="3.58" fill="#4f81bd"/><rect x="793.38" y="594.42" width="0.9" height="3.58" fill="#9dbbe0"/><rect x="795.38" y="597.28" width="2.6" height="0.72" fill="#c0504d"/><rect x="804.14" y="590.18" width="2.6" height="7.82" fill="#4f81bd"/><rect x="804.94" y="590.18" width="0.9" height="7.82" fill="#9dbbe0"/><rect x="806.94" y="597.11" width="2.6" height="0.89" fill="#c0504d"/><rect x="815.71" y="589.30" width="2.6" height="8.70" fill="#4f81bd"/><rect x="816.51" y="589.30" width="0.9" height="8.70" fill="#9dbbe0"/><rect x="818.51" y="597.00" width="2.6" height="1.00" fill="#c0504d"/><rect x="827.27" y="593.78" width="2.6" height="4.22" fill="#4f81bd"/><rect x="828.07" y="593.78" width="0.9" height="4.22" fill="#9dbbe0"/><rect x="830.07" y="596.97" width="2.6" height="1.03" fill="#c0504d"/><rect x="838.83" y="595.66" width="2.6" height="2.34" fill="#4f81bd"/><rect x="839.63" y="595.66" width="0.9" height="2.34" fill="#9dbbe0"/><rect x="841.63" y="596.96" width="2.6" height="1.04" fill="#c0504d"/><rect x="850.39" y="586.85" width="2.6" height="11.15" fill="#4f81bd"/><rect x="851.19" y="586.85" width="0.9" height="11.15" fill="#9dbbe0"/><rect x="853.19" y="596.96" width="2.6" height="1.04" fill="#c0504d"/><rect x="861.96" y="592.62" width="2.6" height="5.38" fill="#4f81bd"/><rect x="862.76" y="592.62" width="0.9" height="5.38" fill="#9dbbe0"/><rect x="864.76" y="596.65" width="2.6" height="1.35" fill="#c0504d"/><rect x="873.52" y="591.34" width="2.6" height="6.66" fill="#4f81bd"/><rect x="874.32" y="591.34" width="0.9" height="6.66" fill="#9dbbe0"/><rect x="876.32" y="596.61" width="2.6" height="1.39" fill="#c0504d"/><rect x="885.08" y="586.36" width="2.6" height="11.64" fill="#4f81bd"/><rect x="885.88" y="586.36" width="0.9" height="11.64" fill="#9dbbe0"/><rect x="887.88" y="596.54" width="2.6" height="1.46" fill="#c0504d"/><rect x="896.64" y="591.70" width="2.6" height="6.30" fill="#4f81bd"/><rect x="897.44" y="591.70" width="0.9" height="6.30" fill="#9dbbe0"/><rect x="899.44" y="596.01" width="2.6" height="1.99" fill="#c0504d"/><rect x="908.21" y="550.40" width="2.6" height="47.60" fill="#4f81bd"/><rect x="909.01" y="550.40" width="0.9" height="47.60" fill="#9dbbe0"/><rect x="911.01" y="592.34" width="2.6" height="5.66" fill="#c0504d"/><rect x="919.77" y="519.43" width="2.6" height="78.57" fill="#4f81bd"/><rect x="920.57" y="519.43" width="0.9" height="78.57" fill="#9dbbe0"/><rect x="922.57" y="586.72" width="2.6" height="11.28" fill="#c0504d"/><defs><radialGradient id="mk" cx="40%" cy="35%" r="65%"><stop offset="0" stop-color="#eef6c8"/><stop offset="0.55" stop-color="#c3d984"/><stop offset="1" stop-color="#86a63e"/></radialGradient></defs><polyline points="703.28,549.68 714.84,514.09 726.41,592.90 737.97,554.76 749.53,587.82 761.09,592.90 772.66,590.36 784.22,592.90 795.78,590.36 807.34,547.14 818.91,592.90 830.47,590.36 842.03,592.90 853.59,572.56 865.16,587.82 876.72,521.71 888.28,570.02 899.84,544.60 911.41,572.56 922.97,582.73" fill="none" stroke="#9bbb59" stroke-width="3.8" stroke-linejoin="round"/><circle cx="703.28" cy="549.68" r="4" fill="url(#mk)" stroke="#7f9e3f" stroke-width="0.9"/><circle cx="714.84" cy="514.09" r="4" fill="url(#mk)" stroke="#7f9e3f" stroke-width="0.9"/><circle cx="726.41" cy="592.90" r="4" fill="url(#mk)" stroke="#7f9e3f" stroke-width="0.9"/><circle cx="737.97" cy="554.76" r="4" fill="url(#mk)" stroke="#7f9e3f" stroke-width="0.9"/><circle cx="749.53" cy="587.82" r="4" fill="url(#mk)" stroke="#7f9e3f" stroke-width="0.9"/><circle cx="761.09" cy="592.90" r="4" fill="url(#mk)" stroke="#7f9e3f" stroke-width="0.9"/><circle cx="772.66" cy="590.36" r="4" fill="url(#mk)" stroke="#7f9e3f" stroke-width="0.9"/><circle cx="784.22" cy="592.90" r="4" fill="url(#mk)" stroke="#7f9e3f" stroke-width="0.9"/><circle cx="795.78" cy="590.36" r="4" fill="url(#mk)" stroke="#7f9e3f" stroke-width="0.9"/><circle cx="807.34" cy="547.14" r="4" fill="url(#mk)" stroke="#7f9e3f" stroke-width="0.9"/><circle cx="818.91" cy="592.90" r="4" fill="url(#mk)" stroke="#7f9e3f" stroke-width="0.9"/><circle cx="830.47" cy="590.36" r="4" fill="url(#mk)" stroke="#7f9e3f" stroke-width="0.9"/><circle cx="842.03" cy="592.90" r="4" fill="url(#mk)" stroke="#7f9e3f" stroke-width="0.9"/><circle cx="853.59" cy="572.56" r="4" fill="url(#mk)" stroke="#7f9e3f" stroke-width="0.9"/><circle cx="865.16" cy="587.82" r="4" fill="url(#mk)" stroke="#7f9e3f" stroke-width="0.9"/><circle cx="876.72" cy="521.71" r="4" fill="url(#mk)" stroke="#7f9e3f" stroke-width="0.9"/><circle cx="888.28" cy="570.02" r="4" fill="url(#mk)" stroke="#7f9e3f" stroke-width="0.9"/><circle cx="899.84" cy="544.60" r="4" fill="url(#mk)" stroke="#7f9e3f" stroke-width="0.9"/><circle cx="911.41" cy="572.56" r="4" fill="url(#mk)" stroke="#7f9e3f" stroke-width="0.9"/><circle cx="922.97" cy="582.73" r="4" fill="url(#mk)" stroke="#7f9e3f" stroke-width="0.9"/></svg>
<span class="t" style="left:726.41px;top:606.5px;font-size:11px;line-height:12px;color:#595959;letter-spacing:-0.158px;transform-origin:0 0;transform:translate(-6.5px,40.93px) rotate(-90deg);">Supplies</span>
<span class="t" style="left:749.53px;top:606.5px;font-size:11px;line-height:12px;color:#595959;letter-spacing:-0.163px;transform-origin:0 0;transform:translate(-6.5px,47.44px) rotate(-90deg);">Fasteners</span>
<span class="t" style="left:772.66px;top:606.5px;font-size:11px;line-height:12px;color:#595959;letter-spacing:-0.171px;transform-origin:0 0;transform:translate(-6.5px,49.83px) rotate(-90deg);">Envelopes</span>
<span class="t" style="left:795.78px;top:606.5px;font-size:11px;line-height:12px;color:#595959;letter-spacing:-0.155px;transform-origin:0 0;transform:translate(-6.5px,55.15px) rotate(-90deg);">Furnishings</span>
<span class="t" style="left:818.91px;top:606.5px;font-size:11px;line-height:12px;color:#595959;letter-spacing:-0.165px;transform-origin:0 0;transform:translate(-6.5px,37.37px) rotate(-90deg);">Storage</span>
<span class="t" style="left:842.03px;top:606.5px;font-size:11px;line-height:12px;color:#595959;letter-spacing:-0.176px;transform-origin:0 0;transform:translate(-6.5px,28.47px) rotate(-90deg);">Paper</span>
<span class="t" style="left:865.16px;top:606.5px;font-size:11px;line-height:12px;color:#595959;letter-spacing:-0.162px;transform-origin:0 0;transform:translate(-6.5px,57.52px) rotate(-90deg);">Accessories</span>
<span class="t" style="left:888.28px;top:606.5px;font-size:11px;line-height:12px;color:#595959;letter-spacing:-0.187px;transform-origin:0 0;transform:translate(-6.5px,36.19px) rotate(-90deg);">Phones</span>
<span class="t" style="top:671.00px;line-height:14px;font-size:11px;color:#595959;letter-spacing:-0.069px;left:691.25px;">Kelly</span>
<span class="t" style="top:686.00px;line-height:14px;font-size:11px;color:#595959;letter-spacing:0.069px;left:682.25px;">Williams</span>
<span class="t" style="top:671.00px;line-height:14px;font-size:11px;color:#595959;letter-spacing:-0.170px;left:774.00px;">Chuck Magee</span>
<span class="t" style="top:671.00px;line-height:14px;font-size:11px;color:#595959;letter-spacing:-0.466px;left:886.50px;">Cassandra</span>
<span class="t" style="top:686.00px;line-height:14px;font-size:11px;color:#595959;letter-spacing:-0.059px;left:889.50px;">Brandow</span>
<span class="t" style="top:671.00px;line-height:14px;font-size:11px;color:#595959;letter-spacing:-0.422px;left:911.00px;">Anna</span>
<span class="t" style="top:686.00px;line-height:14px;font-size:11px;color:#595959;letter-spacing:-0.004px;left:901.00px;">Andreadi</span>
<span class="t" style="top:709.00px;line-height:14px;font-size:11px;color:#595959;letter-spacing:0.077px;left:685.00px;">Central</span>
<span class="t" style="top:709.00px;line-height:14px;font-size:11px;color:#595959;letter-spacing:-0.502px;left:797.00px;">East</span>
<span class="t" style="top:709.00px;line-height:14px;font-size:11px;color:#595959;letter-spacing:-0.148px;left:897.00px;">South</span>
<span class="t" style="top:709.00px;line-height:14px;font-size:11px;color:#595959;letter-spacing:-0.214px;left:911.00px;">West</span>
<div style="left:970px;top:571.5px;width:138px;height:16.5px;background:linear-gradient(#e4e4e4,#c9c9c9);"></div>
<span class="t" style="top:573.00px;line-height:14px;font-size:11px;color:#111;letter-spacing:-0.386px;left:974.00px;">Values</span>
<div style="left:975px;top:595.5px;width:26.5px;height:7px;background:linear-gradient(#cfe3f7 0,#cfe3f7 35%,#4f81bd 36%,#3c6aa6 100%);"></div>
<span class="t" style="top:592.00px;line-height:14px;font-size:11px;color:#595959;letter-spacing:-0.326px;left:1003.75px;">Sum of Sales</span>
<div style="left:975px;top:618.5px;width:26.5px;height:7px;background:linear-gradient(#f7d6d3 0,#f7d6d3 35%,#c0504d 36%,#a8413f 100%);"></div>
<span class="t" style="top:615.00px;line-height:14px;font-size:11px;color:#595959;letter-spacing:-0.005px;left:1003.75px;">Sum of Profit</span>
<svg style="left:975px;top:639px;" width="27" height="11" viewBox="0 0 27 11"><defs><radialGradient id="mk2" cx="40%" cy="35%" r="65%"><stop offset="0" stop-color="#eef6c8"/><stop offset="0.55" stop-color="#c3d984"/><stop offset="1" stop-color="#86a63e"/></radialGradient></defs><path d="M0 5.4H27" stroke="#9bbb59" stroke-width="3.2"/><circle cx="13.5" cy="5.4" r="3.6" fill="url(#mk2)" stroke="#7f9e3f" stroke-width="0.9"/></svg>
<span class="t" style="top:637.25px;line-height:14px;font-size:11px;color:#595959;letter-spacing:-0.071px;left:1003.75px;">Average of Discount</span>
<div style="left:1638px;top:197px;width:21px;height:821px;background:#e6e6e6;"></div>
<div style="left:1641px;top:199px;width:15px;height:792px;background:#cdcdcd;"></div>
<div style="left:1641px;top:199px;width:15px;height:14px;background:#fff;border:1px solid #ababab;box-sizing:border-box;"></div>
<svg style="left:1645px;top:204px;" width="7" height="4" viewBox="0 0 7 4"><path d="M0 4H7L3.5 0Z" fill="#606060"/></svg>
<div style="left:1641px;top:213px;width:15px;height:343px;background:#fff;border:1px solid #ababab;box-sizing:border-box;"></div>
<div style="left:1641px;top:976px;width:15px;height:15px;background:#fff;border:1px solid #ababab;box-sizing:border-box;"></div>
<svg style="left:1645px;top:982px;" width="7" height="4" viewBox="0 0 7 4"><path d="M0 0H7L3.5 4Z" fill="#606060"/></svg>
<div style="left:0px;top:991px;width:1659px;height:27px;background:#e6e6e6;"></div>
<div style="left:0px;top:1018px;width:1920px;height:1px;background:#c6c6c6;"></div>
<svg style="left:26.5px;top:998.5px;" width="5" height="9" viewBox="0 0 5 9"><path d="M5 0V9L0 4.5Z" fill="#217346"/></svg>
<svg style="left:55px;top:998.5px;" width="5" height="9" viewBox="0 0 5 9"><path d="M0 0V9L5 4.5Z" fill="#c6c6c6"/></svg>
<span class="t" style="top:993.50px;line-height:17px;font-size:13px;color:#217346;font-weight:700;letter-spacing:0.053px;left:80.00px;">...</span>
<div style="left:100px;top:994px;width:1px;height:20px;background:#ababab;"></div>
<div style="left:177px;top:994px;width:1px;height:20px;background:#ababab;"></div>
<div style="left:255px;top:994px;width:1px;height:20px;background:#ababab;"></div>
<div style="left:326px;top:994px;width:1px;height:20px;background:#ababab;"></div>
<div style="left:392px;top:994px;width:1px;height:20px;background:#ababab;"></div>
<div style="left:457px;top:994px;width:1px;height:20px;background:#ababab;"></div>
<div style="left:674px;top:994px;width:1px;height:20px;background:#ababab;"></div>
<span class="t" style="top:995.50px;line-height:16px;font-size:12.5px;color:#444;letter-spacing:0.078px;left:113.50px;">custmer</span>
<span class="t" style="top:995.50px;line-height:16px;font-size:12.5px;color:#444;letter-spacing:0.208px;left:189.50px;">Products</span>
<span class="t" style="top:995.50px;line-height:16px;font-size:12.5px;color:#444;letter-spacing:0.032px;left:268.00px;">Returns</span>
<span class="t" style="top:995.50px;line-height:16px;font-size:12.5px;color:#444;letter-spacing:0.179px;left:338.50px;">People</span>
<span class="t" style="top:995.50px;line-height:16px;font-size:12.5px;color:#444;letter-spacing:-0.270px;left:405.00px;">Sheet1</span>
<span class="t" style="top:995.50px;line-height:16px;font-size:12.5px;color:#444;letter-spacing:0.480px;left:470.50px;">new profit</span>
<span class="t" style="top:995.50px;line-height:16px;font-size:12.5px;color:#444;letter-spacing:-0.270px;left:623.50px;">Sheet4</span>
<div style="left:545px;top:990px;width:66px;height:25px;background:#fff;border-left:1px solid #ababab;border-right:1px solid #ababab;box-sizing:border-box;"></div>
<div style="left:545px;top:1013px;width:66px;height:2.5px;background:#217346;"></div>
<span class="t" style="top:995.50px;line-height:16px;font-size:12.5px;color:#217346;font-weight:700;letter-spacing:-0.166px;left:557.50px;">Sheet5</span>
<svg style="left:707px;top:995px;" width="18" height="18" viewBox="0 0 18 18"><circle cx="9" cy="9" r="7.6" fill="none" stroke="#666" stroke-width="1.2"/><path d="M9 5V13M5 9H13" stroke="#666" stroke-width="1.4"/></svg>
<div style="left:948px;top:999px;width:1.6px;height:1.6px;background:#8a8a8a;"></div>
<div style="left:948px;top:1003.5px;width:1.6px;height:1.6px;background:#8a8a8a;"></div>
<div style="left:948px;top:1008px;width:1.6px;height:1.6px;background:#8a8a8a;"></div>
<div style="left:965px;top:997px;width:673px;height:15.5px;background:#cdcdcd;"></div>
<div style="left:965px;top:997px;width:15px;height:15.5px;background:#fff;border:1px solid #ababab;box-sizing:border-box;"></div>
<svg style="left:970px;top:1001.5px;" width="4" height="7" viewBox="0 0 4 7"><path d="M4 0V7L0 3.5Z" fill="#606060"/></svg>
<div style="left:980px;top:997px;width:609px;height:15.5px;background:#fff;border:1px solid #ababab;box-sizing:border-box;"></div>
<div style="left:1623px;top:997px;width:15px;height:15.5px;background:#fff;border:1px solid #ababab;box-sizing:border-box;"></div>
<svg style="left:1629px;top:1001.5px;" width="4" height="7" viewBox="0 0 4 7"><path d="M0 0V7L4 3.5Z" fill="#606060"/></svg>
<div style="left:0px;top:1019px;width:1920px;height:21px;background:#f1f1f1;"></div>
<span class="t" style="top:1022.00px;line-height:15px;font-size:11.5px;color:#444;letter-spacing:-0.248px;left:7.00px;">Ready</span>
<div style="left:1628px;top:1019px;width:38px;height:21px;background:#c8c8c8;"></div>
<svg style="left:1641px;top:1023px;" width="13" height="13" viewBox="0 0 13 13"><path d="M0.5 0.5H12.5V12.5H0.5ZM4.5 0.5V12.5M8.5 0.5V12.5M0.5 4.5H12.5M0.5 8.5H12.5" fill="none" stroke="#555" stroke-width="1"/></svg>
<svg style="left:1678px;top:1022.5px;" width="14" height="14" viewBox="0 0 14 14"><rect x="0.5" y="0.5" width="13" height="12.6" rx="1" fill="none" stroke="#555"/><rect x="3.5" y="3.5" width="7" height="7" fill="none" stroke="#555"/><path d="M5 6H9M5 8H9" stroke="#555" stroke-width="0.9"/></svg>
<svg style="left:1716px;top:1022.5px;" width="14" height="13" viewBox="0 0 14 13"><path d="M0.5 0.5H13.5V12H0.5ZM0.5 7H13.5M5 0.5V7M8.6 0.5V7" fill="none" stroke="#555" stroke-width="1"/></svg>
<div style="left:1746.5px;top:1028.6px;width:6px;height:1.8px;background:#555;"></div>
<div style="left:1757px;top:1029px;width:100px;height:1px;background:#9a9a9a;"></div>
<div style="left:1805.5px;top:1024.5px;width:3px;height:10px;background:#555;"></div>
<div style="left:1861.5px;top:1028.7px;width:7px;height:1.6px;background:#555;"></div>
<div style="left:1864.2px;top:1026px;width:1.6px;height:7px;background:#555;"></div>
<span class="t" style="top:1022.00px;line-height:15px;font-size:11.5px;color:#444;letter-spacing:-0.853px;left:1885.00px;">100%</span>
<div style="left:0px;top:1040px;width:1928px;height:8px;background:#1b2833;"></div>
<div style="left:48px;top:1040px;width:344px;height:8px;background:#f2f2f2;"></div>
<div style="left:688px;top:1040px;width:48px;height:8px;background:#616b74;"></div>
<div style="left:840px;top:1040px;width:290px;height:8px;background:#171b1f;"></div>
<span class="t" style="top:1043.00px;line-height:14px;font-size:11px;color:#fff;letter-spacing:0.041px;left:1797.00px;">11:30:59 PM</span>
<div style="left:1915px;top:1040px;width:1px;height:8px;background:#7f8a93;"></div>
<div style="left:1659px;top:197px;width:261px;height:821px;background:#e6e6e6;"></div>
<div style="left:1659px;top:197px;width:1px;height:821px;background:#c6c6c6;"></div>
<span class="t" style="top:210.00px;line-height:26px;font-size:21px;color:#2c7a50;letter-spacing:-0.338px;left:1673.50px;">PivotTable Fields</span>
<svg style="left:1880.0px;top:215.25px" width="10" height="6.5" viewBox="-1 -1 10 6.5"><path d="M0 0H8L4.0 4.5Z" fill="#555"/></svg>
<svg style="left:1898px;top:214px;" width="10" height="10" viewBox="0 0 10 10"><path d="M0.8 0.8L9.2 9.2M9.2 0.8L0.8 9.2" stroke="#444" stroke-width="1.6"/></svg>
<span class="t" style="top:249.00px;line-height:16px;font-size:12px;color:#444;letter-spacing:-0.026px;left:1673.50px;">Choose fields to add to report:</span>
<div style="left:1862px;top:243px;width:44px;height:27px;background:#fff;border:1px solid #ababab;box-sizing:border-box;"></div>
<svg style="left:1871.5px;top:249.5px;" width="14" height="14" viewBox="0 0 14 14"><g transform="translate(7 7)" fill="#777"><rect x="-1.5" y="-7" width="3" height="4" transform="rotate(0)"/><rect x="-1.5" y="-7" width="3" height="4" transform="rotate(45)"/><rect x="-1.5" y="-7" width="3" height="4" transform="rotate(90)"/><rect x="-1.5" y="-7" width="3" height="4" transform="rotate(135)"/><rect x="-1.5" y="-7" width="3" height="4" transform="rotate(180)"/><rect x="-1.5" y="-7" width="3" height="4" transform="rotate(225)"/><rect x="-1.5" y="-7" width="3" height="4" transform="rotate(270)"/><rect x="-1.5" y="-7" width="3" height="4" transform="rotate(315)"/><circle r="4.8"/><circle r="2" fill="#fff"/></g></svg>
<svg style="left:1893.25px;top:253.2px" width="8.5" height="5.6" viewBox="-1 -1 8.5 5.6"><path d="M0 0H6.5L3.25 3.6Z" fill="#555"/></svg>
<div style="left:1672px;top:283px;width:234px;height:20px;background:#fff;border:1px solid #ababab;box-sizing:border-box;"></div>
<span class="t" style="top:284.50px;line-height:16px;font-size:12px;color:#666;letter-spacing:-0.505px;left:1674.50px;">Search</span>
<svg style="left:1889px;top:286px;" width="14" height="14" viewBox="0 0 14 14"><circle cx="8.6" cy="5.4" r="4" fill="none" stroke="#3b78c4" stroke-width="1.5"/><path d="M5.8 8.4L1.2 13" stroke="#3b78c4" stroke-width="2"/></svg>
<div style="left:1672px;top:319px;width:234px;height:286.5px;background:#fdfdfd;"></div>
<div style="left:1672px;top:319px;width:216px;height:287px;overflow:hidden;">
<div style="left:2px;top:-3.5px;width:13px;height:13px;background:#fff;border:1px solid #ababab;box-sizing:border-box;"></div>
<span class="t" style="left:21.5px;top:-5.0px;line-height:16px;font-size:12px;color:#444;letter-spacing:-0.505px;">State</span>
<div style="left:2px;top:15.5px;width:13px;height:13px;background:#fff;border:1px solid #ababab;box-sizing:border-box;"></div>
<span class="t" style="left:21.5px;top:14.0px;line-height:16px;font-size:12px;color:#444;letter-spacing:-0.217px;">Postal Code</span>
<div style="left:2px;top:34.5px;width:13px;height:13px;background:#fff;border:1px solid #ababab;box-sizing:border-box;"></div>
<svg style="left:4px;top:37.0px" width="10" height="9" viewBox="0 0 10 9"><path d="M0.8 4.6L3.4 7.4L9 0.8" fill="none" stroke="#666" stroke-width="1.2"/></svg>
<span class="t" style="left:21.5px;top:33.0px;line-height:16px;font-size:12px;color:#262626;font-weight:700;letter-spacing:-0.279px;">Region</span>
<div style="left:2px;top:53.5px;width:13px;height:13px;background:#fff;border:1px solid #ababab;box-sizing:border-box;"></div>
<span class="t" style="left:21.5px;top:52.0px;line-height:16px;font-size:12px;color:#444;letter-spacing:-0.120px;">Product ID</span>
<div style="left:2px;top:72.5px;width:13px;height:13px;background:#fff;border:1px solid #ababab;box-sizing:border-box;"></div>
<span class="t" style="left:21.5px;top:71.0px;line-height:16px;font-size:12px;color:#444;letter-spacing:-0.088px;">Category</span>
<div style="left:2px;top:91.5px;width:13px;height:13px;background:#fff;border:1px solid #ababab;box-sizing:border-box;"></div>
<svg style="left:4px;top:94.0px" width="10" height="9" viewBox="0 0 10 9"><path d="M0.8 4.6L3.4 7.4L9 0.8" fill="none" stroke="#666" stroke-width="1.2"/></svg>
<span class="t" style="left:21.5px;top:90.0px;line-height:16px;font-size:12px;color:#262626;font-weight:700;letter-spacing:-0.224px;">Sub-Category</span>
<div style="left:2px;top:110.5px;width:13px;height:13px;background:#fff;border:1px solid #ababab;box-sizing:border-box;"></div>
<span class="t" style="left:21.5px;top:109.0px;line-height:16px;font-size:12px;color:#444;letter-spacing:0.024px;">Product Name</span>
<div style="left:2px;top:129.5px;width:13px;height:13px;background:#fff;border:1px solid #ababab;box-sizing:border-box;"></div>
<svg style="left:4px;top:132.0px" width="10" height="9" viewBox="0 0 10 9"><path d="M0.8 4.6L3.4 7.4L9 0.8" fill="none" stroke="#666" stroke-width="1.2"/></svg>
<span class="t" style="left:21.5px;top:128.0px;line-height:16px;font-size:12px;color:#262626;font-weight:700;letter-spacing:-0.673px;">Sales</span>
<div style="left:2px;top:148.5px;width:13px;height:13px;background:#fff;border:1px solid #ababab;box-sizing:border-box;"></div>
<span class="t" style="left:21.5px;top:147.0px;line-height:16px;font-size:12px;color:#444;letter-spacing:0.162px;">Quantity</span>
<div style="left:2px;top:167.5px;width:13px;height:13px;background:#fff;border:1px solid #ababab;box-sizing:border-box;"></div>
<svg style="left:4px;top:170.0px" width="10" height="9" viewBox="0 0 10 9"><path d="M0.8 4.6L3.4 7.4L9 0.8" fill="none" stroke="#666" stroke-width="1.2"/></svg>
<span class="t" style="left:21.5px;top:166.0px;line-height:16px;font-size:12px;color:#262626;font-weight:700;letter-spacing:-0.293px;">Discount</span>
<div style="left:2px;top:186.5px;width:13px;height:13px;background:#fff;border:1px solid #ababab;box-sizing:border-box;"></div>
<svg style="left:4px;top:189.0px" width="10" height="9" viewBox="0 0 10 9"><path d="M0.8 4.6L3.4 7.4L9 0.8" fill="none" stroke="#666" stroke-width="1.2"/></svg>
<span class="t" style="left:21.5px;top:185.0px;line-height:16px;font-size:12px;color:#262626;font-weight:700;letter-spacing:0.027px;">Profit</span>
<div style="left:2px;top:205.5px;width:13px;height:13px;background:#fff;border:1px solid #ababab;box-sizing:border-box;"></div>
<span class="t" style="left:21.5px;top:204.0px;line-height:16px;font-size:12px;color:#444;letter-spacing:-0.254px;">Order Status</span>
<div style="left:2px;top:224.5px;width:13px;height:13px;background:#fff;border:1px solid #ababab;box-sizing:border-box;"></div>
<span class="t" style="left:21.5px;top:223.0px;line-height:16px;font-size:12px;color:#444;letter-spacing:-0.005px;">Column1</span>
<div style="left:2px;top:243.5px;width:13px;height:13px;background:#fff;border:1px solid #ababab;box-sizing:border-box;"></div>
<svg style="left:4px;top:246.0px" width="10" height="9" viewBox="0 0 10 9"><path d="M0.8 4.6L3.4 7.4L9 0.8" fill="none" stroke="#666" stroke-width="1.2"/></svg>
<span class="t" style="left:21.5px;top:242.0px;line-height:16px;font-size:12px;color:#262626;font-weight:700;letter-spacing:-0.274px;">NewColumn.Person</span>
</div>
<span class="t" style="top:587.50px;line-height:16px;font-size:12px;color:#444;letter-spacing:-0.805px;left:1674.50px;">MORE TABLES...</span>
<div style="left:1890px;top:321px;width:15px;height:284px;background:#f3f3f3;"></div>
<div style="left:1890px;top:321px;width:15px;height:15px;background:#fff;border:1px solid #ababab;box-sizing:border-box;"></div>
<svg style="left:1894px;top:326px;" width="7" height="4" viewBox="0 0 7 4"><path d="M0 4H7L3.5 0Z" fill="#606060"/></svg>
<div style="left:1890px;top:589px;width:15px;height:15.5px;background:#fff;border:1px solid #ababab;box-sizing:border-box;"></div>
<svg style="left:1894px;top:595px;" width="7" height="4" viewBox="0 0 7 4"><path d="M0 0H7L3.5 4Z" fill="#606060"/></svg>
<div style="left:1890px;top:439px;width:15px;height:150.5px;background:#fff;border:1px solid #ababab;box-sizing:border-box;"></div>
<div style="left:1674px;top:622.5px;width:235px;height:1px;background:repeating-linear-gradient(to right,#bdbdbd 0,#bdbdbd 1px,transparent 1px,transparent 3px);"></div>
<span class="t" style="top:627.00px;line-height:16px;font-size:12px;color:#444;letter-spacing:-0.187px;left:1676.00px;">Drag fields between areas below:</span>
<svg style="left:1678px;top:661px;" width="12" height="12" viewBox="0 0 12 12"><path d="M0.4 0.6H11.2L7 5.4V11.4H4.6V5.4Z" fill="#8a8a8a"/></svg>
<span class="t" style="top:659.50px;line-height:16px;font-size:12px;color:#444;letter-spacing:-1.137px;left:1698.00px;">FILTERS</span>
<svg style="left:1798px;top:662px;" width="11" height="10" viewBox="0 0 11 10"><path d="M1 0V10M3.6 0V10M6.2 0V10M8.8 0V10" stroke="#8a8a8a" stroke-width="1.2"/></svg>
<span class="t" style="top:659.50px;line-height:16px;font-size:12px;color:#444;letter-spacing:-0.431px;left:1816.50px;">COLUMNS</span>
<svg style="left:1679.5px;top:823px;" width="11" height="9" viewBox="0 0 11 9"><path d="M0 0.6H11M0 3.2H11M0 5.8H11M0 8.4H11" stroke="#8a8a8a" stroke-width="1.2"/></svg>
<span class="t" style="top:819.50px;line-height:16px;font-size:12px;color:#444;letter-spacing:-1.084px;left:1698.00px;">ROWS</span>
<span class="t" style="top:818.00px;line-height:18px;font-size:14px;color:#7a7a7a;left:1798.00px;font-family:'Liberation Serif',serif;">Σ</span>
<span class="t" style="top:819.50px;line-height:16px;font-size:12px;color:#444;letter-spacing:-0.911px;left:1816.50px;">VALUES</span>
<div style="left:1790px;top:659px;width:1px;height:307px;background:#c6c6c6;"></div>
<div style="left:1675px;top:812.5px;width:232px;height:1px;background:#c6c6c6;"></div>
<div style="left:1675px;top:679px;width:109px;height:127px;background:#fdfdfd;"></div>
<div style="left:1793px;top:679px;width:113px;height:127px;background:#fdfdfd;"></div>
<div style="left:1675px;top:839.5px;width:109px;height:126.5px;background:#fdfdfd;"></div>
<div style="left:1793px;top:839.5px;width:113px;height:126.5px;background:#fdfdfd;"></div>
<div style="left:1794px;top:681px;width:112px;height:19.5px;background:#fff;border:1px solid #b4b4b4;box-sizing:border-box;"></div>
<span class="t" style="top:681.20px;line-height:18px;font-size:14px;color:#8a8a8a;left:1802.50px;font-family:'Liberation Serif',serif;">Σ</span>
<span class="t" style="top:683.05px;line-height:16px;font-size:12px;color:#444;letter-spacing:-0.301px;left:1818.50px;">Values</span>
<svg style="left:1888.5px;top:687.75px" width="9" height="6" viewBox="-1 -1 9 6"><path d="M0 0H7L3.5 4Z" fill="#222"/></svg>
<div style="left:1676.5px;top:841.5px;width:106.0px;height:18px;background:#fff;border:1px solid #b4b4b4;box-sizing:border-box;"></div>
<span class="t" style="top:842.80px;line-height:16px;font-size:12px;color:#444;letter-spacing:-0.257px;left:1683.00px;">Region</span>
<svg style="left:1765.0px;top:847.5px" width="9" height="6" viewBox="-1 -1 9 6"><path d="M0 0H7L3.5 4Z" fill="#222"/></svg>
<div style="left:1676.5px;top:862.5px;width:106.0px;height:18px;background:#fff;border:1px solid #b4b4b4;box-sizing:border-box;"></div>
<span class="t" style="top:863.80px;line-height:16px;font-size:12px;color:#444;letter-spacing:0.022px;left:1683.00px;">NewColumn....</span>
<svg style="left:1765.0px;top:868.5px" width="9" height="6" viewBox="-1 -1 9 6"><path d="M0 0H7L3.5 4Z" fill="#222"/></svg>
<div style="left:1676.5px;top:883.5px;width:106.0px;height:18px;background:#fff;border:1px solid #b4b4b4;box-sizing:border-box;"></div>
<span class="t" style="top:884.80px;line-height:16px;font-size:12px;color:#444;letter-spacing:-0.088px;left:1683.00px;">Sub-Category</span>
<svg style="left:1765.0px;top:889.5px" width="9" height="6" viewBox="-1 -1 9 6"><path d="M0 0H7L3.5 4Z" fill="#222"/></svg>
<div style="left:1794.5px;top:841.5px;width:111.0px;height:18px;background:#fff;border:1px solid #b4b4b4;box-sizing:border-box;"></div>
<span class="t" style="top:842.80px;line-height:16px;font-size:12px;color:#444;letter-spacing:-0.365px;left:1801.00px;">Sum of Sales</span>
<svg style="left:1888.0px;top:847.5px" width="9" height="6" viewBox="-1 -1 9 6"><path d="M0 0H7L3.5 4Z" fill="#222"/></svg>
<div style="left:1794.5px;top:862.5px;width:111.0px;height:18px;background:#fff;border:1px solid #b4b4b4;box-sizing:border-box;"></div>
<span class="t" style="top:863.80px;line-height:16px;font-size:12px;color:#444;letter-spacing:0.048px;left:1801.00px;">Sum of Profit</span>
<svg style="left:1888.0px;top:868.5px" width="9" height="6" viewBox="-1 -1 9 6"><path d="M0 0H7L3.5 4Z" fill="#222"/></svg>
<div style="left:1794.5px;top:883.5px;width:111.0px;height:18px;background:#fff;border:1px solid #b4b4b4;box-sizing:border-box;"></div>
<span class="t" style="top:884.80px;line-height:16px;font-size:12px;color:#444;letter-spacing:-0.157px;left:1801.00px;">Average of Di...</span>
<svg style="left:1888.0px;top:889.5px" width="9" height="6" viewBox="-1 -1 9 6"><path d="M0 0H7L3.5 4Z" fill="#222"/></svg>
<div style="left:1675px;top:990.5px;width:13px;height:13px;background:#fff;border:1px solid #ababab;box-sizing:border-box;"></div>
<span class="t" style="top:989.00px;line-height:16px;font-size:12px;color:#444;letter-spacing:-0.146px;left:1694.00px;">Defer Layout Update</span>
<div style="left:1855px;top:986px;width:51px;height:21px;background:#fdfdfd;"></div>
<span class="t" style="top:988.50px;line-height:16px;font-size:12px;color:#b7c6bd;letter-spacing:-0.798px;left:1859.00px;">UPDATE</span>
<svg style="left:0;top:0;pointer-events:none" width="1928" height="1048" viewBox="0 0 1928 1048"><g opacity="0.065" fill="#000" stroke="#000" stroke-width="7" stroke-linecap="butt" stroke-linejoin="round"><path d="M851.3 996V1011Q851.3 1022.4 862.7 1022.4H888.2Q899.6 1022.4 899.6 1011V996" fill="none"/><path d="M862.8 987.3L869 981.3999999999999L875.2 987.3L869 993.2Z" stroke="none"/><path d="M878.0 986.6L884.2 980.6999999999999L890.4000000000001 986.6L884.2 992.5000000000001Z" stroke="none"/><path d="M910.3 981V1011Q910.3 1022.4 921.7 1022.4H1005.6" fill="none"/><path d="M940.5 996V1020M960.4 996V1020M980.5 997L977.5 1020" fill="none"/><circle cx="1009.6" cy="1010.7" r="12.1" fill="none" stroke-width="7.4"/><rect x="993" y="981" width="13.2" height="6.8" stroke="none"/><rect x="993" y="981" width="7.6" height="22" stroke="none"/><rect x="1009.3" y="981" width="14.5" height="6.8" stroke="none"/><path d="M1018 1022.4H1078.4" fill="none"/><path d="M1041.5 1004Q1050 997.6 1058 999.3Q1074.6 1003.4 1074.6 1022" fill="none"/><path d="M1049.8 986.5L1056 980.5999999999999L1062.2 986.5L1056 992.4000000000001Z" stroke="none"/></g></svg></div></body></html>
